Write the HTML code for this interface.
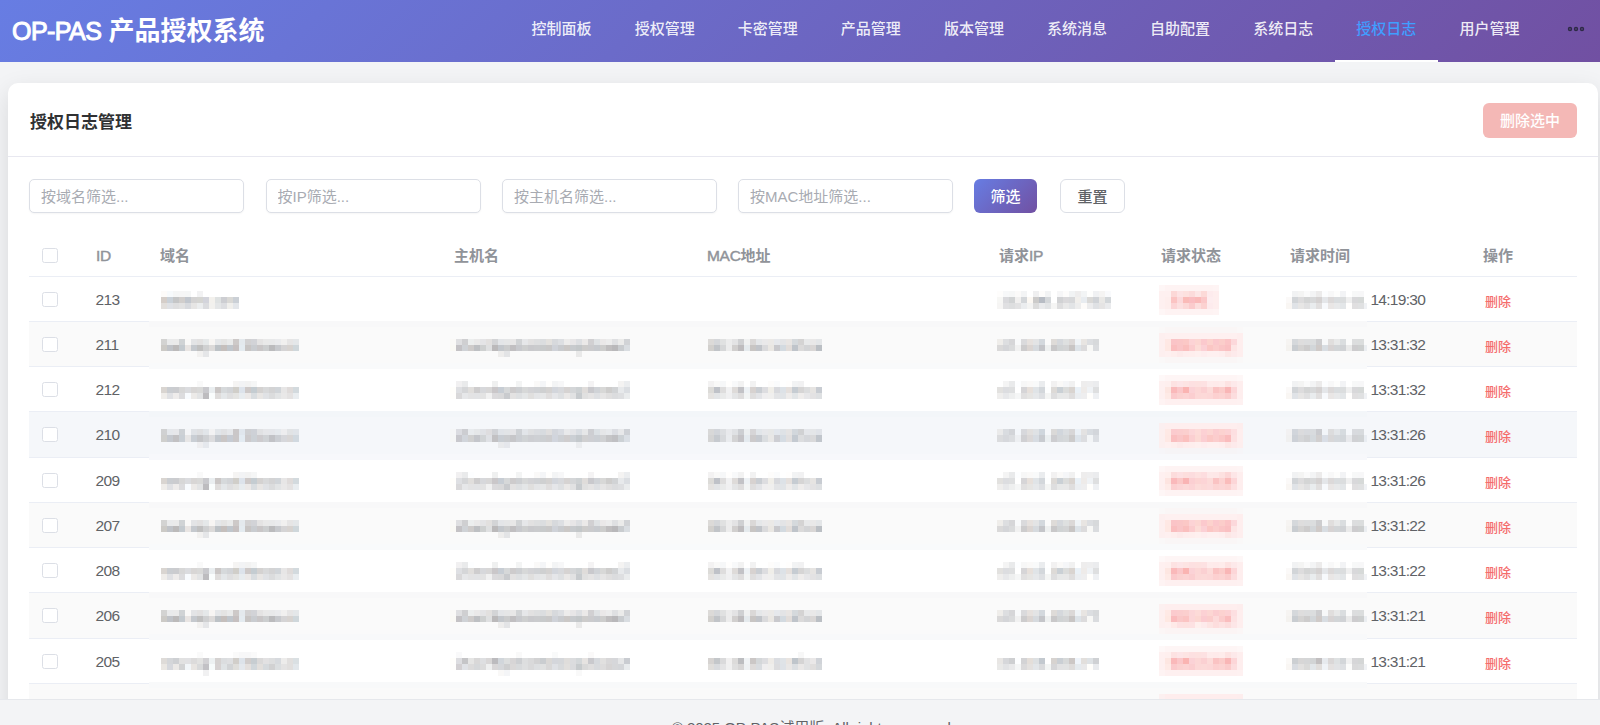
<!DOCTYPE html>
<html lang="zh-CN">
<head>
<meta charset="utf-8">
<title>OP-PAS 产品授权系统</title>
<style>
*{box-sizing:border-box;margin:0;padding:0}
button,input{font-family:inherit;border:0;outline:0;display:block}
html,body{width:1600px;height:725px;overflow:hidden}
body{background:#f3f4f6;font-family:"Liberation Sans","Noto Sans CJK SC",sans-serif;color:#606266;position:relative}
.hdr{position:absolute;left:0;top:0;width:1600px;height:62px;background:linear-gradient(135deg,#677de3 0%,#7150a2 100%)}
.logo{position:absolute;left:12px;top:1px;height:61px;line-height:61px;font-size:26px;font-weight:700;color:#fff;white-space:nowrap}
.lat{font-size:25px;letter-spacing:-.55px;font-weight:400;-webkit-text-stroke:1px #fff}
.nav{position:absolute;left:510px;top:0;height:62px;display:flex}
.nav a{display:block;width:103.1px;height:62px;line-height:58px;text-align:center;font-size:15px;color:rgba(255,255,255,.9);font-weight:500;text-decoration:none;white-space:nowrap}
.nav a.on{color:#409eff;border-bottom:2px solid #fff}
.more{position:absolute;left:1567px;top:25px;width:18px;height:8px}
.card{position:absolute;left:8px;top:83px;width:1590px;height:700px;background:#fff;border-radius:10px;box-shadow:0 8px 24px rgba(0,0,0,.115)}
.ctitle{position:absolute;left:22px;top:25.5px;font-size:17px;font-weight:700;color:#303133;line-height:28px;white-space:nowrap}
.bdel{position:absolute;left:1475px;top:20px;width:94px;height:34.5px;border-radius:6px;background:#f4b8b6;color:#fff;font-size:15px;line-height:36px;font-weight:500;text-align:center}
.hr{position:absolute;left:0;top:73px;width:1590px;height:1px;background:#e8e8f0}
.inp{position:absolute;top:96px;width:215px;height:34px;border:1px solid #dcdfe6;border-radius:5px;padding-left:11px;line-height:32px;font-size:15px;color:#a8abb2;white-space:nowrap;box-shadow:0 1px 2px rgba(0,0,0,.04)}
.inp::placeholder{color:#a8abb2;opacity:1}
.btn{position:absolute;top:96px;height:34px;border-radius:6px;font-size:15px;line-height:33.4px;text-align:center}
.b1{left:966px;width:63px;background:linear-gradient(135deg,#677de3,#7150a2);color:#fff;line-height:35.4px;font-weight:500}
.b2{left:1052.3px;width:64.6px;border:1px solid #dcdfe6;color:#606266;background:#fff;font-weight:500}
.tbl{position:absolute;left:21px;top:149px;width:1548px}
.th{position:absolute;top:2px;height:44px;line-height:44px;font-size:15px;font-weight:700;color:#909399;white-space:nowrap}
.th i{font-style:normal;font-weight:400;font-size:15.5px;letter-spacing:-.3px;-webkit-text-stroke:.45px #909399}
.row{position:absolute;left:0;width:1548px;height:45.25px;border-bottom:1px solid #ebeef5}
.row.s{background:#fafafa}
.row.h{background:#f5f7fa}
.cb{position:absolute;left:13.4px;width:15.3px;height:15px;border:1px solid #dcdfe6;border-radius:2.5px;background:#fff}
.id{position:absolute;left:66.6px;font-size:15.5px;letter-spacing:-.65px;color:#606266;line-height:45px;top:0}
.tm{position:absolute;left:1341.4px;font-size:15.5px;letter-spacing:-.7px;color:#606266;line-height:45px;top:0}
.del{position:absolute;left:1456px;font-size:13px;font-weight:500;color:#f56c6c;line-height:45px;top:2px}
.mos{position:absolute;left:149px;top:279px}
.ftr{position:absolute;left:0;top:699px;width:1600px;height:26px;background:#f3f4f6;border-top:1px solid #e6e8ec;overflow:hidden}
.ftr span{position:absolute;left:672px;top:17.7px;font-size:15px;color:#606266;line-height:20px;white-space:nowrap;letter-spacing:-.08px}
</style>
</head>
<body>
<div class="hdr">
  <div class="logo"><span class="lat">OP-PAS</span> 产品授权系统</div>
  <div class="nav">
    <a>控制面板</a><a>授权管理</a><a>卡密管理</a><a>产品管理</a><a>版本管理</a><a>系统消息</a><a>自助配置</a><a>系统日志</a><a class="on">授权日志</a><a>用户管理</a>
  </div>
  <svg class="more" viewBox="0 0 18 8"><circle cx="3" cy="4" r="1.45" fill="none" stroke="#2d2a45" stroke-width="1.5"/><circle cx="9" cy="4" r="1.45" fill="none" stroke="#2d2a45" stroke-width="1.5"/><circle cx="15" cy="4" r="1.45" fill="none" stroke="#2d2a45" stroke-width="1.5"/></svg>
</div>
<div class="card">
  <div class="ctitle">授权日志管理</div>
  <button class="bdel" disabled>删除选中</button>
  <div class="hr"></div>
  <input class="inp" style="left:21px" placeholder="按域名筛选...">
  <input class="inp" style="left:257.5px" placeholder="按IP筛选...">
  <input class="inp" style="left:494px" placeholder="按主机名筛选...">
  <input class="inp" style="left:730px" placeholder="按MAC地址筛选...">
  <button class="btn b1">筛选</button>
  <button class="btn b2">重置</button>
  <div class="tbl">
    <div class="cb" style="top:16px"></div>
    <div class="th" style="left:67px"><i>ID</i></div>
    <div class="th" style="left:131px">域名</div>
    <div class="th" style="left:425px">主机名</div>
    <div class="th" style="left:678px"><i>MAC</i>地址</div>
    <div class="th" style="left:970px">请求<i>IP</i></div>
    <div class="th" style="left:1132px">请求状态</div>
    <div class="th" style="left:1261px">请求时间</div>
    <div class="th" style="left:1454px">操作</div>
    <div class="row" style="top:43.5px;height:1px;border-bottom:1px solid #ebeef5"></div>
    <div class="row " style="top:44.5px"><div class="cb" style="top:15px"></div><div class="id">213</div><div class="tm">14:19:30</div><div class="del">删除</div></div>
<div class="row s" style="top:89.75px"><div class="cb" style="top:15px"></div><div class="id">211</div><div class="tm">13:31:32</div><div class="del">删除</div></div>
<div class="row " style="top:135.0px"><div class="cb" style="top:15px"></div><div class="id">212</div><div class="tm">13:31:32</div><div class="del">删除</div></div>
<div class="row h" style="top:180.25px"><div class="cb" style="top:15px"></div><div class="id">210</div><div class="tm">13:31:26</div><div class="del">删除</div></div>
<div class="row " style="top:225.5px"><div class="cb" style="top:15px"></div><div class="id">209</div><div class="tm">13:31:26</div><div class="del">删除</div></div>
<div class="row s" style="top:270.75px"><div class="cb" style="top:15px"></div><div class="id">207</div><div class="tm">13:31:22</div><div class="del">删除</div></div>
<div class="row " style="top:316.0px"><div class="cb" style="top:15px"></div><div class="id">208</div><div class="tm">13:31:22</div><div class="del">删除</div></div>
<div class="row s" style="top:361.25px"><div class="cb" style="top:15px"></div><div class="id">206</div><div class="tm">13:31:21</div><div class="del">删除</div></div>
<div class="row " style="top:406.5px"><div class="cb" style="top:15px"></div><div class="id">205</div><div class="tm">13:31:21</div><div class="del">删除</div></div>
<div class="row s" style="top:451.75px"><div class="cb" style="top:15px"></div><div class="id">204</div><div class="tm">13:31:20</div><div class="del">删除</div></div>

  </div>
</div>
<svg class="mos" width="1218" height="420" viewBox="149 279 1218 420" shape-rendering="crispEdges"><g fill="#fef6f6"><rect x="1159" y="285" width="6" height="6"/><rect x="1159" y="309" width="6" height="6"/><rect x="1159" y="466" width="6" height="6"/><rect x="1159" y="490" width="6" height="6"/></g><g fill="#fef3f3"><rect x="1165" y="285" width="48" height="6"/><rect x="1165" y="309" width="48" height="6"/><rect x="1159" y="399" width="6" height="6"/><rect x="1165" y="466" width="72" height="6"/><rect x="1165" y="490" width="72" height="6"/><rect x="1159" y="580" width="6" height="6"/><rect x="1159" y="670" width="6" height="6"/></g><g fill="#fef4f4"><rect x="1213" y="285" width="6" height="6"/><rect x="1213" y="309" width="6" height="6"/><rect x="1237" y="466" width="6" height="6"/><rect x="1237" y="490" width="6" height="6"/></g><g fill="#fdfbf9"><rect x="161" y="291" width="6" height="6"/><rect x="1081" y="303" width="6" height="6"/></g><g fill="#f7fafc"><rect x="167" y="291" width="6" height="6"/></g><g fill="#f5f6f6"><rect x="173" y="291" width="6" height="6"/><rect x="185" y="291" width="6" height="6"/><rect x="251" y="381" width="6" height="6"/><rect x="1015" y="393" width="6" height="6"/><rect x="450" y="435" width="6" height="7"/><rect x="251" y="472" width="6" height="6"/><rect x="1015" y="484" width="6" height="6"/><rect x="251" y="562" width="6" height="6"/><rect x="1015" y="574" width="6" height="6"/><rect x="1015" y="664" width="6" height="6"/></g><g fill="#f6f6f6"><rect x="179" y="291" width="6" height="6"/></g><g fill="#f2f2f3"><rect x="197" y="291" width="6" height="6"/><rect x="209" y="429" width="6" height="6"/></g><g fill="#fefdfc"><rect x="997" y="291" width="6" height="6"/></g><g fill="#f7f8f9"><rect x="1003" y="291" width="6" height="6"/><rect x="1322" y="339" width="6" height="6"/><rect x="1322" y="520" width="6" height="6"/><rect x="1322" y="610" width="6" height="6"/></g><g fill="#f6f7f7"><rect x="1009" y="291" width="6" height="6"/></g><g fill="#fbfaf9"><rect x="1015" y="291" width="6" height="6"/></g><g fill="#f3f4f5"><rect x="1021" y="291" width="6" height="6"/><rect x="1310" y="291" width="6" height="6"/><rect x="552" y="381" width="6" height="6"/><rect x="1310" y="381" width="6" height="6"/><rect x="552" y="472" width="6" height="6"/><rect x="1310" y="472" width="6" height="6"/><rect x="552" y="562" width="6" height="6"/><rect x="1310" y="562" width="6" height="6"/></g><g fill="#efeff0"><rect x="1033" y="291" width="6" height="6"/></g><g fill="#fdfcfb"><rect x="1039" y="291" width="6" height="6"/><rect x="1063" y="291" width="6" height="6"/><rect x="768" y="381" width="6" height="6"/><rect x="768" y="472" width="6" height="6"/><rect x="768" y="562" width="6" height="6"/></g><g fill="#f2f3f4"><rect x="1045" y="291" width="6" height="6"/><rect x="792" y="381" width="6" height="6"/><rect x="792" y="472" width="6" height="6"/><rect x="792" y="562" width="6" height="6"/></g><g fill="#f6f6f7"><rect x="1057" y="291" width="6" height="6"/></g><g fill="#f1f3f4"><rect x="1069" y="291" width="6" height="6"/></g><g fill="#eeeded"><rect x="1075" y="291" width="6" height="6"/><rect x="1081" y="381" width="6" height="6"/><rect x="1081" y="472" width="6" height="6"/><rect x="1081" y="562" width="6" height="6"/></g><g fill="#f2f4f5"><rect x="1081" y="291" width="6" height="6"/></g><g fill="#fefefd"><rect x="1087" y="291" width="6" height="6"/></g><g fill="#f0f1f3"><rect x="1093" y="291" width="6" height="6"/></g><g fill="#f5f4f3"><rect x="1099" y="291" width="6" height="6"/><rect x="233" y="381" width="6" height="6"/><rect x="233" y="472" width="6" height="6"/><rect x="233" y="562" width="6" height="6"/></g><g fill="#f9fafc"><rect x="1105" y="291" width="6" height="6"/></g><g fill="#fef0f0"><rect x="1159" y="291" width="12" height="6"/><rect x="1159" y="297" width="6" height="6"/><rect x="1159" y="303" width="6" height="6"/><rect x="1165" y="333" width="72" height="6"/><rect x="1165" y="351" width="6" height="6"/><rect x="1207" y="351" width="12" height="6"/><rect x="1159" y="381" width="6" height="6"/><rect x="1159" y="387" width="6" height="6"/><rect x="1159" y="393" width="6" height="6"/><rect x="1165" y="399" width="72" height="6"/><rect x="1165" y="442" width="6" height="6"/><rect x="1207" y="442" width="12" height="6"/><rect x="1159" y="472" width="6" height="6"/><rect x="1159" y="478" width="6" height="6"/><rect x="1159" y="484" width="6" height="6"/><rect x="1165" y="514" width="72" height="6"/><rect x="1165" y="532" width="6" height="6"/><rect x="1207" y="532" width="12" height="6"/><rect x="1159" y="562" width="6" height="6"/><rect x="1159" y="568" width="6" height="6"/><rect x="1159" y="574" width="6" height="6"/><rect x="1165" y="580" width="72" height="6"/><rect x="1165" y="622" width="6" height="6"/><rect x="1159" y="652" width="6" height="6"/><rect x="1159" y="658" width="6" height="6"/><rect x="1159" y="664" width="6" height="6"/><rect x="1165" y="670" width="72" height="6"/></g><g fill="#fcd8d7"><rect x="1171" y="291" width="6" height="6"/><rect x="1183" y="303" width="6" height="6"/><rect x="1195" y="393" width="6" height="6"/><rect x="1195" y="574" width="6" height="6"/><rect x="1195" y="664" width="6" height="6"/></g><g fill="#fde3e4"><rect x="1177" y="291" width="6" height="6"/></g><g fill="#fde1df"><rect x="1183" y="291" width="6" height="6"/></g><g fill="#fcdbdb"><rect x="1189" y="291" width="6" height="6"/></g><g fill="#fde6e6"><rect x="1195" y="291" width="6" height="6"/></g><g fill="#fcdad8"><rect x="1201" y="291" width="6" height="6"/></g><g fill="#fdebed"><rect x="1207" y="291" width="6" height="6"/><rect x="1207" y="303" width="6" height="6"/></g><g fill="#feeeee"><rect x="1213" y="291" width="6" height="6"/><rect x="1213" y="297" width="6" height="6"/><rect x="1213" y="303" width="6" height="6"/><rect x="1237" y="333" width="6" height="6"/><rect x="1237" y="339" width="6" height="6"/><rect x="1237" y="345" width="6" height="6"/><rect x="1219" y="351" width="6" height="6"/><rect x="1237" y="351" width="6" height="6"/><rect x="1237" y="381" width="6" height="6"/><rect x="1237" y="387" width="6" height="6"/><rect x="1237" y="393" width="6" height="6"/><rect x="1165" y="423" width="72" height="6"/><rect x="1237" y="429" width="6" height="6"/><rect x="1237" y="435" width="6" height="7"/><rect x="1219" y="442" width="6" height="6"/><rect x="1237" y="472" width="6" height="6"/><rect x="1237" y="478" width="6" height="6"/><rect x="1237" y="484" width="6" height="6"/><rect x="1237" y="514" width="6" height="6"/><rect x="1237" y="520" width="6" height="6"/><rect x="1237" y="526" width="6" height="6"/><rect x="1219" y="532" width="6" height="6"/><rect x="1237" y="532" width="6" height="6"/><rect x="1237" y="562" width="6" height="6"/><rect x="1237" y="568" width="6" height="6"/><rect x="1237" y="574" width="6" height="6"/><rect x="1165" y="604" width="72" height="6"/><rect x="1237" y="610" width="6" height="6"/><rect x="1237" y="616" width="6" height="6"/><rect x="1237" y="622" width="6" height="6"/><rect x="1237" y="652" width="6" height="6"/><rect x="1237" y="658" width="6" height="6"/><rect x="1237" y="664" width="6" height="6"/></g><g fill="#f1f2f3"><rect x="1292" y="291" width="6" height="6"/><rect x="1292" y="381" width="6" height="6"/><rect x="1292" y="472" width="6" height="6"/><rect x="1292" y="562" width="6" height="6"/></g><g fill="#f4f4f3"><rect x="1298" y="291" width="6" height="6"/><rect x="1027" y="303" width="6" height="6"/><rect x="1298" y="381" width="6" height="6"/><rect x="1298" y="472" width="6" height="6"/><rect x="1298" y="562" width="6" height="6"/></g><g fill="#fafafa"><rect x="1304" y="291" width="6" height="6"/><rect x="1304" y="381" width="6" height="6"/><rect x="1304" y="472" width="6" height="6"/><rect x="1304" y="562" width="6" height="6"/><rect x="197" y="652" width="6" height="6"/><rect x="233" y="652" width="6" height="6"/><rect x="251" y="652" width="6" height="6"/></g><g fill="#ecebeb"><rect x="1316" y="291" width="6" height="6"/><rect x="1316" y="381" width="6" height="6"/><rect x="1316" y="472" width="6" height="6"/><rect x="1316" y="562" width="6" height="6"/></g><g fill="#fcfdfe"><rect x="1322" y="291" width="6" height="6"/><rect x="1322" y="381" width="6" height="6"/><rect x="1322" y="472" width="6" height="6"/><rect x="1322" y="562" width="6" height="6"/></g><g fill="#f8f8f8"><rect x="1328" y="291" width="6" height="6"/><rect x="1328" y="381" width="6" height="6"/><rect x="1328" y="472" width="6" height="6"/><rect x="1328" y="562" width="6" height="6"/></g><g fill="#fdfdfc"><rect x="1334" y="291" width="6" height="6"/><rect x="1334" y="381" width="6" height="6"/><rect x="1334" y="472" width="6" height="6"/><rect x="1334" y="562" width="6" height="6"/></g><g fill="#f2f3f5"><rect x="1340" y="291" width="6" height="6"/><rect x="239" y="381" width="6" height="6"/><rect x="1340" y="381" width="6" height="6"/><rect x="239" y="472" width="6" height="6"/><rect x="1340" y="472" width="6" height="6"/><rect x="239" y="562" width="6" height="6"/><rect x="1340" y="562" width="6" height="6"/></g><g fill="#f7f8f8"><rect x="1352" y="291" width="6" height="6"/><rect x="1352" y="381" width="6" height="6"/><rect x="1352" y="472" width="6" height="6"/><rect x="1352" y="562" width="6" height="6"/></g><g fill="#f7f7f8"><rect x="1358" y="291" width="6" height="6"/><rect x="558" y="381" width="6" height="6"/><rect x="1358" y="381" width="6" height="6"/><rect x="558" y="472" width="6" height="6"/><rect x="1358" y="472" width="6" height="6"/><rect x="558" y="562" width="6" height="6"/><rect x="1358" y="562" width="6" height="6"/><rect x="239" y="652" width="12" height="6"/></g><g fill="#d5cec9"><rect x="161" y="297" width="6" height="6"/></g><g fill="#cad1d8"><rect x="167" y="297" width="6" height="6"/></g><g fill="#c5c6c7"><rect x="173" y="297" width="6" height="6"/></g><g fill="#d1cecc"><rect x="179" y="297" width="6" height="6"/></g><g fill="#c2c7ce"><rect x="185" y="297" width="6" height="6"/></g><g fill="#d4d3d3"><rect x="191" y="297" width="6" height="6"/><rect x="798" y="339" width="6" height="6"/><rect x="798" y="520" width="6" height="6"/><rect x="798" y="610" width="6" height="6"/></g><g fill="#d5d5d2"><rect x="197" y="297" width="6" height="6"/></g><g fill="#d3d4db"><rect x="203" y="297" width="6" height="6"/></g><g fill="#f3f1ed"><rect x="209" y="297" width="6" height="6"/></g><g fill="#dfe2e2"><rect x="215" y="297" width="6" height="6"/></g><g fill="#cdced2"><rect x="221" y="297" width="6" height="6"/><rect x="588" y="429" width="6" height="6"/><rect x="528" y="435" width="6" height="7"/></g><g fill="#dad9d6"><rect x="227" y="297" width="6" height="6"/></g><g fill="#cbd0d6"><rect x="233" y="297" width="6" height="6"/></g><g fill="#f7f7f5"><rect x="997" y="297" width="6" height="6"/></g><g fill="#dadadd"><rect x="1003" y="297" width="6" height="6"/></g><g fill="#d1d3d4"><rect x="1009" y="297" width="6" height="6"/></g><g fill="#f1f0ef"><rect x="1015" y="297" width="6" height="6"/><rect x="281" y="339" width="6" height="6"/><rect x="281" y="520" width="6" height="6"/><rect x="281" y="610" width="6" height="6"/></g><g fill="#d4d7da"><rect x="1021" y="297" width="6" height="6"/><rect x="1045" y="297" width="6" height="6"/></g><g fill="#fcf8f3"><rect x="1027" y="297" width="6" height="6"/></g><g fill="#cccbca"><rect x="1033" y="297" width="6" height="6"/></g><g fill="#b7bcc4"><rect x="1039" y="297" width="6" height="6"/></g><g fill="#d1d2d4"><rect x="1057" y="297" width="6" height="6"/></g><g fill="#dad9db"><rect x="1063" y="297" width="6" height="6"/></g><g fill="#d7d8da"><rect x="1069" y="297" width="6" height="6"/></g><g fill="#f1efec"><rect x="1075" y="297" width="6" height="6"/></g><g fill="#e8ecf0"><rect x="1081" y="297" width="6" height="6"/></g><g fill="#dad9d7"><rect x="1087" y="297" width="6" height="6"/></g><g fill="#d0d3d7"><rect x="1093" y="297" width="6" height="6"/><rect x="594" y="387" width="6" height="6"/><rect x="594" y="478" width="6" height="6"/><rect x="594" y="568" width="6" height="6"/></g><g fill="#e9e8e6"><rect x="1099" y="297" width="6" height="6"/></g><g fill="#d3d7da"><rect x="1105" y="297" width="6" height="6"/></g><g fill="#feeeed"><rect x="1165" y="297" width="6" height="6"/><rect x="1165" y="303" width="6" height="6"/><rect x="1171" y="351" width="6" height="6"/><rect x="1189" y="351" width="6" height="6"/><rect x="1171" y="442" width="6" height="6"/><rect x="1189" y="442" width="6" height="6"/><rect x="1171" y="532" width="6" height="6"/><rect x="1189" y="532" width="6" height="6"/></g><g fill="#fbc4c3"><rect x="1171" y="297" width="6" height="6"/><rect x="1183" y="616" width="6" height="6"/></g><g fill="#fcd9db"><rect x="1177" y="297" width="6" height="6"/></g><g fill="#fabbb8"><rect x="1183" y="297" width="6" height="6"/></g><g fill="#fabdc1"><rect x="1189" y="297" width="6" height="6"/></g><g fill="#fabab9"><rect x="1195" y="297" width="6" height="6"/></g><g fill="#fbc8c9"><rect x="1201" y="297" width="6" height="6"/></g><g fill="#fdedef"><rect x="1207" y="297" width="6" height="6"/></g><g fill="#fbf9f8"><rect x="1286" y="297" width="6" height="6"/><rect x="1286" y="387" width="6" height="6"/><rect x="1286" y="478" width="6" height="6"/><rect x="1286" y="568" width="6" height="6"/></g><g fill="#d2d5d8"><rect x="1292" y="297" width="6" height="6"/><rect x="1292" y="387" width="6" height="6"/><rect x="1292" y="478" width="6" height="6"/><rect x="1292" y="568" width="6" height="6"/></g><g fill="#dddcdd"><rect x="1298" y="297" width="6" height="6"/><rect x="1298" y="387" width="6" height="6"/><rect x="1298" y="478" width="6" height="6"/><rect x="1298" y="568" width="6" height="6"/></g><g fill="#d4d5d5"><rect x="1304" y="297" width="6" height="6"/><rect x="1304" y="387" width="6" height="6"/><rect x="1304" y="478" width="6" height="6"/><rect x="1304" y="568" width="6" height="6"/></g><g fill="#d8d9da"><rect x="1310" y="297" width="6" height="6"/><rect x="263" y="387" width="6" height="6"/><rect x="1310" y="387" width="6" height="6"/><rect x="263" y="478" width="6" height="6"/><rect x="1310" y="478" width="6" height="6"/><rect x="263" y="568" width="6" height="6"/><rect x="1310" y="568" width="6" height="6"/></g><g fill="#d5d2d2"><rect x="1316" y="297" width="6" height="6"/><rect x="1316" y="387" width="6" height="6"/><rect x="1316" y="478" width="6" height="6"/><rect x="1316" y="568" width="6" height="6"/></g><g fill="#e4e6e9"><rect x="1322" y="297" width="6" height="6"/><rect x="1322" y="387" width="6" height="6"/><rect x="1322" y="478" width="6" height="6"/><rect x="1322" y="568" width="6" height="6"/></g><g fill="#dcd9d9"><rect x="1328" y="297" width="6" height="6"/><rect x="1328" y="387" width="6" height="6"/><rect x="1328" y="478" width="6" height="6"/><rect x="1328" y="568" width="6" height="6"/></g><g fill="#dadddf"><rect x="1334" y="297" width="6" height="6"/><rect x="1340" y="339" width="6" height="6"/><rect x="1334" y="387" width="6" height="6"/><rect x="1334" y="478" width="6" height="6"/><rect x="1340" y="520" width="6" height="6"/><rect x="1334" y="568" width="6" height="6"/><rect x="1340" y="610" width="6" height="6"/></g><g fill="#dbddde"><rect x="1340" y="297" width="6" height="6"/><rect x="1310" y="339" width="6" height="6"/><rect x="1340" y="387" width="6" height="6"/><rect x="1340" y="478" width="6" height="6"/><rect x="1310" y="520" width="6" height="6"/><rect x="1340" y="568" width="6" height="6"/><rect x="1310" y="610" width="6" height="6"/></g><g fill="#efefef"><rect x="1346" y="297" width="6" height="6"/><rect x="1346" y="387" width="6" height="6"/><rect x="1346" y="478" width="6" height="6"/><rect x="1346" y="568" width="6" height="6"/></g><g fill="#d8d8da"><rect x="1352" y="297" width="6" height="6"/><rect x="1352" y="387" width="6" height="6"/><rect x="1352" y="478" width="6" height="6"/><rect x="1352" y="568" width="6" height="6"/></g><g fill="#d6d9d8"><rect x="1358" y="297" width="6" height="6"/><rect x="1358" y="387" width="6" height="6"/><rect x="1358" y="478" width="6" height="6"/><rect x="1358" y="568" width="6" height="6"/></g><g fill="#e2dfdc"><rect x="161" y="303" width="6" height="6"/><rect x="1081" y="658" width="6" height="6"/><rect x="257" y="664" width="6" height="6"/></g><g fill="#dfe1e5"><rect x="167" y="303" width="6" height="6"/><rect x="486" y="435" width="6" height="7"/><rect x="552" y="664" width="6" height="6"/></g><g fill="#dededf"><rect x="173" y="303" width="6" height="6"/><rect x="1057" y="303" width="6" height="6"/><rect x="1051" y="393" width="6" height="6"/><rect x="1051" y="484" width="6" height="6"/><rect x="1051" y="574" width="6" height="6"/></g><g fill="#e2e2e2"><rect x="179" y="303" width="6" height="6"/></g><g fill="#d8dade"><rect x="185" y="303" width="6" height="6"/><rect x="1304" y="429" width="6" height="6"/><rect x="1352" y="429" width="6" height="6"/></g><g fill="#e6e5e4"><rect x="191" y="303" width="6" height="6"/></g><g fill="#ebedee"><rect x="197" y="303" width="6" height="6"/></g><g fill="#dbdcdf"><rect x="203" y="303" width="6" height="6"/><rect x="185" y="387" width="6" height="6"/><rect x="185" y="478" width="6" height="6"/><rect x="185" y="568" width="6" height="6"/></g><g fill="#f2f1ee"><rect x="209" y="303" width="6" height="6"/></g><g fill="#e4e6e7"><rect x="215" y="303" width="6" height="6"/><rect x="522" y="393" width="6" height="6"/><rect x="522" y="484" width="6" height="6"/><rect x="522" y="574" width="6" height="6"/></g><g fill="#dddee1"><rect x="221" y="303" width="6" height="6"/></g><g fill="#f0efec"><rect x="227" y="303" width="6" height="6"/></g><g fill="#e3e6ea"><rect x="233" y="303" width="6" height="6"/></g><g fill="#f6f5f4"><rect x="997" y="303" width="6" height="6"/></g><g fill="#e0e0e2"><rect x="1003" y="303" width="6" height="6"/></g><g fill="#dddedf"><rect x="1009" y="303" width="6" height="6"/><rect x="269" y="658" width="6" height="6"/><rect x="522" y="658" width="6" height="6"/></g><g fill="#e2e2e3"><rect x="1015" y="303" width="6" height="6"/><rect x="804" y="658" width="6" height="6"/><rect x="1057" y="664" width="6" height="6"/></g><g fill="#ebedef"><rect x="1021" y="303" width="6" height="6"/><rect x="624" y="381" width="6" height="6"/><rect x="624" y="472" width="6" height="6"/><rect x="624" y="562" width="6" height="6"/></g><g fill="#dcdcdc"><rect x="1033" y="303" width="6" height="6"/><rect x="480" y="664" width="6" height="6"/></g><g fill="#e9eaec"><rect x="1039" y="303" width="6" height="6"/><rect x="498" y="442" width="6" height="6"/></g><g fill="#e2e4e6"><rect x="1045" y="303" width="6" height="6"/><rect x="1069" y="303" width="6" height="6"/></g><g fill="#f5f5f4"><rect x="1051" y="303" width="6" height="6"/></g><g fill="#e9e9e9"><rect x="1063" y="303" width="6" height="6"/><rect x="263" y="339" width="6" height="6"/><rect x="576" y="351" width="6" height="6"/><rect x="263" y="520" width="6" height="6"/><rect x="576" y="532" width="6" height="6"/><rect x="263" y="610" width="6" height="6"/><rect x="576" y="622" width="6" height="6"/></g><g fill="#ededed"><rect x="1075" y="303" width="6" height="6"/></g><g fill="#ececed"><rect x="1087" y="303" width="6" height="6"/></g><g fill="#dfe1e4"><rect x="1093" y="303" width="6" height="6"/><rect x="732" y="429" width="6" height="6"/></g><g fill="#e5e4e4"><rect x="1099" y="303" width="6" height="6"/><rect x="588" y="393" width="6" height="6"/><rect x="588" y="484" width="6" height="6"/><rect x="588" y="574" width="6" height="6"/></g><g fill="#eaebed"><rect x="1105" y="303" width="6" height="6"/><rect x="275" y="339" width="6" height="6"/><rect x="275" y="520" width="6" height="6"/><rect x="275" y="610" width="6" height="6"/></g><g fill="#fcd5d6"><rect x="1171" y="303" width="6" height="6"/><rect x="1177" y="484" width="6" height="6"/></g><g fill="#fce0e0"><rect x="1177" y="303" width="6" height="6"/></g><g fill="#fbcbcc"><rect x="1189" y="303" width="6" height="6"/></g><g fill="#fcdedd"><rect x="1195" y="303" width="6" height="6"/></g><g fill="#fcd2d1"><rect x="1201" y="303" width="6" height="6"/></g><g fill="#f9f6f3"><rect x="1286" y="303" width="6" height="6"/><rect x="1286" y="393" width="6" height="6"/><rect x="1286" y="484" width="6" height="6"/><rect x="1286" y="574" width="6" height="6"/><rect x="1286" y="664" width="6" height="6"/></g><g fill="#e0e3e7"><rect x="1292" y="303" width="6" height="6"/><rect x="1292" y="393" width="6" height="6"/><rect x="1292" y="484" width="6" height="6"/><rect x="1292" y="574" width="6" height="6"/></g><g fill="#e7e6e5"><rect x="1298" y="303" width="6" height="6"/><rect x="1298" y="393" width="6" height="6"/><rect x="1298" y="484" width="6" height="6"/><rect x="1298" y="574" width="6" height="6"/></g><g fill="#e0e0e1"><rect x="1304" y="303" width="6" height="6"/><rect x="1304" y="393" width="6" height="6"/><rect x="1304" y="484" width="6" height="6"/><rect x="1304" y="574" width="6" height="6"/></g><g fill="#e9ecee"><rect x="1310" y="303" width="6" height="6"/><rect x="1310" y="393" width="6" height="6"/><rect x="1310" y="484" width="6" height="6"/><rect x="1310" y="574" width="6" height="6"/></g><g fill="#e1dfdf"><rect x="1316" y="303" width="6" height="6"/><rect x="1316" y="393" width="6" height="6"/><rect x="786" y="435" width="6" height="7"/><rect x="1316" y="484" width="6" height="6"/><rect x="1316" y="574" width="6" height="6"/></g><g fill="#f7f9fc"><rect x="1322" y="303" width="6" height="6"/><rect x="1322" y="393" width="6" height="6"/><rect x="1322" y="484" width="6" height="6"/><rect x="1322" y="574" width="6" height="6"/></g><g fill="#e9e6e5"><rect x="1328" y="303" width="6" height="6"/><rect x="1328" y="393" width="6" height="6"/><rect x="1328" y="484" width="6" height="6"/><rect x="1328" y="574" width="6" height="6"/></g><g fill="#e8e9ea"><rect x="1334" y="303" width="6" height="6"/><rect x="269" y="339" width="6" height="6"/><rect x="804" y="339" width="6" height="6"/><rect x="1334" y="393" width="6" height="6"/><rect x="1334" y="484" width="6" height="6"/><rect x="269" y="520" width="6" height="6"/><rect x="804" y="520" width="6" height="6"/><rect x="1334" y="574" width="6" height="6"/><rect x="269" y="610" width="6" height="6"/><rect x="804" y="610" width="6" height="6"/></g><g fill="#e3e6e8"><rect x="1340" y="303" width="6" height="6"/><rect x="1340" y="393" width="6" height="6"/><rect x="1340" y="484" width="6" height="6"/><rect x="1340" y="574" width="6" height="6"/></g><g fill="#fffefd"><rect x="1346" y="303" width="6" height="6"/><rect x="546" y="381" width="6" height="6"/><rect x="726" y="381" width="6" height="6"/><rect x="786" y="381" width="6" height="6"/><rect x="1346" y="393" width="6" height="6"/><rect x="546" y="472" width="6" height="6"/><rect x="726" y="472" width="6" height="6"/><rect x="786" y="472" width="6" height="6"/><rect x="1346" y="484" width="6" height="6"/><rect x="546" y="562" width="6" height="6"/><rect x="726" y="562" width="6" height="6"/><rect x="786" y="562" width="6" height="6"/><rect x="1346" y="574" width="6" height="6"/></g><g fill="#e0dfe0"><rect x="1352" y="303" width="6" height="6"/><rect x="1352" y="393" width="6" height="6"/><rect x="1352" y="484" width="6" height="6"/><rect x="1352" y="574" width="6" height="6"/></g><g fill="#e0e1e2"><rect x="1358" y="303" width="6" height="6"/><rect x="1358" y="393" width="6" height="6"/><rect x="1358" y="484" width="6" height="6"/><rect x="1358" y="574" width="6" height="6"/></g><g fill="#f0f2f5"><rect x="1364" y="303" width="3" height="6"/><rect x="1364" y="393" width="3" height="6"/><rect x="1364" y="484" width="3" height="6"/><rect x="1364" y="574" width="3" height="6"/><rect x="1364" y="664" width="3" height="6"/></g><g fill="#f8f8f9"><rect x="149" y="321" width="1218" height="6"/><rect x="149" y="502" width="1218" height="6"/><rect x="149" y="592" width="1218" height="6"/></g><g fill="#faf8f8"><rect x="1159" y="327" width="6" height="6"/><rect x="1237" y="327" width="6" height="6"/><rect x="1159" y="357" width="6" height="6"/><rect x="1237" y="357" width="6" height="6"/><rect x="1159" y="508" width="6" height="6"/><rect x="1237" y="508" width="6" height="6"/><rect x="1159" y="538" width="6" height="6"/><rect x="1237" y="538" width="6" height="6"/></g><g fill="#faf6f6"><rect x="1165" y="327" width="72" height="6"/><rect x="1165" y="357" width="72" height="6"/><rect x="1165" y="508" width="72" height="6"/><rect x="1165" y="538" width="72" height="6"/></g><g fill="#fdefef"><rect x="1159" y="333" width="6" height="6"/><rect x="1159" y="339" width="6" height="6"/><rect x="1159" y="345" width="6" height="6"/><rect x="1159" y="351" width="6" height="6"/><rect x="1159" y="514" width="6" height="6"/><rect x="1159" y="520" width="6" height="6"/><rect x="1159" y="526" width="6" height="6"/><rect x="1159" y="532" width="6" height="6"/><rect x="1159" y="610" width="6" height="6"/><rect x="1159" y="616" width="6" height="6"/><rect x="1159" y="622" width="6" height="6"/></g><g fill="#d3d3d2"><rect x="161" y="339" width="6" height="6"/><rect x="161" y="520" width="6" height="6"/><rect x="161" y="610" width="6" height="6"/></g><g fill="#e9eaeb"><rect x="167" y="339" width="6" height="6"/><rect x="462" y="381" width="6" height="6"/><rect x="1009" y="381" width="6" height="6"/><rect x="462" y="472" width="6" height="6"/><rect x="1009" y="472" width="6" height="6"/><rect x="167" y="520" width="6" height="6"/><rect x="462" y="562" width="6" height="6"/><rect x="1009" y="562" width="6" height="6"/><rect x="167" y="610" width="6" height="6"/></g><g fill="#eaeaea"><rect x="173" y="339" width="6" height="6"/><rect x="1346" y="345" width="6" height="6"/><rect x="997" y="429" width="6" height="6"/><rect x="173" y="520" width="6" height="6"/><rect x="1346" y="526" width="6" height="6"/><rect x="173" y="610" width="6" height="6"/><rect x="1346" y="616" width="6" height="6"/></g><g fill="#d0d3d5"><rect x="179" y="339" width="6" height="6"/><rect x="522" y="435" width="6" height="7"/><rect x="1358" y="435" width="6" height="7"/><rect x="179" y="520" width="6" height="6"/><rect x="179" y="610" width="6" height="6"/></g><g fill="#f9f8f7"><rect x="185" y="339" width="6" height="6"/><rect x="185" y="520" width="6" height="6"/><rect x="185" y="610" width="6" height="6"/><rect x="498" y="670" width="6" height="6"/></g><g fill="#e3e4e6"><rect x="191" y="339" width="6" height="6"/><rect x="780" y="339" width="6" height="6"/><rect x="504" y="351" width="6" height="6"/><rect x="774" y="393" width="6" height="6"/><rect x="774" y="484" width="6" height="6"/><rect x="191" y="520" width="6" height="6"/><rect x="780" y="520" width="6" height="6"/><rect x="504" y="532" width="6" height="6"/><rect x="774" y="574" width="6" height="6"/><rect x="191" y="610" width="6" height="6"/><rect x="780" y="610" width="6" height="6"/><rect x="504" y="622" width="6" height="6"/></g><g fill="#e2e1e1"><rect x="197" y="339" width="6" height="6"/><rect x="528" y="339" width="6" height="6"/><rect x="197" y="520" width="6" height="6"/><rect x="528" y="520" width="6" height="6"/><rect x="197" y="610" width="6" height="6"/><rect x="528" y="610" width="6" height="6"/></g><g fill="#e5e8e9"><rect x="203" y="339" width="6" height="6"/><rect x="203" y="520" width="6" height="6"/><rect x="203" y="610" width="6" height="6"/></g><g fill="#f7f5f3"><rect x="209" y="339" width="6" height="6"/><rect x="209" y="520" width="6" height="6"/><rect x="209" y="610" width="6" height="6"/></g><g fill="#e5e7e9"><rect x="215" y="339" width="6" height="6"/><rect x="756" y="339" width="6" height="6"/><rect x="474" y="429" width="6" height="6"/><rect x="215" y="520" width="6" height="6"/><rect x="756" y="520" width="6" height="6"/><rect x="215" y="610" width="6" height="6"/><rect x="756" y="610" width="6" height="6"/></g><g fill="#e4e4e3"><rect x="221" y="339" width="6" height="6"/><rect x="221" y="520" width="6" height="6"/><rect x="221" y="610" width="6" height="6"/></g><g fill="#e9eaea"><rect x="227" y="339" width="6" height="6"/><rect x="720" y="393" width="6" height="6"/><rect x="720" y="484" width="6" height="6"/><rect x="227" y="520" width="6" height="6"/><rect x="720" y="574" width="6" height="6"/><rect x="227" y="610" width="6" height="6"/></g><g fill="#cdc9c8"><rect x="233" y="339" width="6" height="6"/><rect x="233" y="520" width="6" height="6"/><rect x="233" y="610" width="6" height="6"/></g><g fill="#e4e9ed"><rect x="239" y="339" width="6" height="6"/><rect x="239" y="520" width="6" height="6"/><rect x="239" y="610" width="6" height="6"/></g><g fill="#d2d1d2"><rect x="245" y="339" width="6" height="6"/><rect x="245" y="520" width="6" height="6"/><rect x="245" y="610" width="6" height="6"/></g><g fill="#d2d3d7"><rect x="251" y="339" width="6" height="6"/><rect x="251" y="520" width="6" height="6"/><rect x="251" y="610" width="6" height="6"/></g><g fill="#e4e3e3"><rect x="257" y="339" width="6" height="6"/><rect x="786" y="429" width="6" height="6"/><rect x="257" y="520" width="6" height="6"/><rect x="257" y="610" width="6" height="6"/><rect x="281" y="664" width="6" height="6"/></g><g fill="#e6e5e5"><rect x="287" y="339" width="6" height="6"/><rect x="600" y="393" width="6" height="6"/><rect x="600" y="484" width="6" height="6"/><rect x="287" y="520" width="6" height="6"/><rect x="600" y="574" width="6" height="6"/><rect x="287" y="610" width="6" height="6"/></g><g fill="#e4e7e9"><rect x="293" y="339" width="6" height="6"/><rect x="221" y="393" width="6" height="6"/><rect x="221" y="484" width="6" height="6"/><rect x="293" y="520" width="6" height="6"/><rect x="221" y="574" width="6" height="6"/><rect x="293" y="610" width="6" height="6"/></g><g fill="#faf9f7"><rect x="450" y="339" width="6" height="6"/><rect x="450" y="520" width="6" height="6"/><rect x="450" y="610" width="6" height="6"/></g><g fill="#dfdfe1"><rect x="456" y="339" width="6" height="6"/><rect x="456" y="520" width="6" height="6"/><rect x="456" y="610" width="6" height="6"/></g><g fill="#cfcfd1"><rect x="462" y="339" width="6" height="6"/><rect x="462" y="520" width="6" height="6"/><rect x="462" y="610" width="6" height="6"/></g><g fill="#eceeee"><rect x="468" y="339" width="6" height="6"/><rect x="468" y="520" width="6" height="6"/><rect x="468" y="610" width="6" height="6"/></g><g fill="#eae9e9"><rect x="474" y="339" width="6" height="6"/><rect x="474" y="520" width="6" height="6"/><rect x="474" y="610" width="6" height="6"/></g><g fill="#e4e4e6"><rect x="480" y="339" width="6" height="6"/><rect x="480" y="520" width="6" height="6"/><rect x="480" y="610" width="6" height="6"/></g><g fill="#e2e0df"><rect x="486" y="339" width="6" height="6"/><rect x="486" y="520" width="6" height="6"/><rect x="486" y="610" width="6" height="6"/></g><g fill="#d3d4d6"><rect x="492" y="339" width="6" height="6"/><rect x="804" y="345" width="6" height="6"/><rect x="492" y="520" width="6" height="6"/><rect x="804" y="526" width="6" height="6"/><rect x="492" y="610" width="6" height="6"/><rect x="804" y="616" width="6" height="6"/></g><g fill="#e3e5e8"><rect x="498" y="339" width="6" height="6"/><rect x="498" y="520" width="6" height="6"/><rect x="498" y="610" width="6" height="6"/></g><g fill="#e5e6e7"><rect x="504" y="339" width="6" height="6"/><rect x="504" y="520" width="6" height="6"/><rect x="504" y="610" width="6" height="6"/><rect x="618" y="658" width="6" height="6"/></g><g fill="#e8e7e7"><rect x="510" y="339" width="6" height="6"/><rect x="510" y="520" width="6" height="6"/><rect x="510" y="610" width="6" height="6"/></g><g fill="#d1d3d5"><rect x="516" y="339" width="6" height="6"/><rect x="612" y="387" width="6" height="6"/><rect x="612" y="478" width="6" height="6"/><rect x="516" y="520" width="6" height="6"/><rect x="612" y="568" width="6" height="6"/><rect x="516" y="610" width="6" height="6"/></g><g fill="#e6e7e9"><rect x="522" y="339" width="6" height="6"/><rect x="462" y="393" width="6" height="6"/><rect x="462" y="484" width="6" height="6"/><rect x="522" y="520" width="6" height="6"/><rect x="462" y="574" width="6" height="6"/><rect x="522" y="610" width="6" height="6"/></g><g fill="#dedfe0"><rect x="534" y="339" width="6" height="6"/><rect x="1009" y="387" width="6" height="6"/><rect x="1093" y="387" width="6" height="6"/><rect x="1009" y="478" width="6" height="6"/><rect x="1093" y="478" width="6" height="6"/><rect x="534" y="520" width="6" height="6"/><rect x="1009" y="568" width="6" height="6"/><rect x="1093" y="568" width="6" height="6"/><rect x="534" y="610" width="6" height="6"/><rect x="522" y="664" width="6" height="6"/></g><g fill="#dbdddf"><rect x="540" y="339" width="6" height="6"/><rect x="540" y="520" width="6" height="6"/><rect x="540" y="610" width="6" height="6"/><rect x="221" y="658" width="6" height="6"/></g><g fill="#e3e1de"><rect x="546" y="339" width="6" height="6"/><rect x="546" y="520" width="6" height="6"/><rect x="546" y="610" width="6" height="6"/></g><g fill="#d7d9dc"><rect x="552" y="339" width="6" height="6"/><rect x="720" y="435" width="6" height="7"/><rect x="552" y="520" width="6" height="6"/><rect x="552" y="610" width="6" height="6"/></g><g fill="#dddfe2"><rect x="558" y="339" width="6" height="6"/><rect x="576" y="339" width="6" height="6"/><rect x="558" y="520" width="6" height="6"/><rect x="576" y="520" width="6" height="6"/><rect x="558" y="610" width="6" height="6"/><rect x="576" y="610" width="6" height="6"/></g><g fill="#edeceb"><rect x="564" y="339" width="6" height="6"/><rect x="564" y="520" width="6" height="6"/><rect x="564" y="610" width="6" height="6"/><rect x="281" y="658" width="6" height="6"/></g><g fill="#e7e6e7"><rect x="570" y="339" width="6" height="6"/><rect x="570" y="520" width="6" height="6"/><rect x="570" y="610" width="6" height="6"/></g><g fill="#ebe9e8"><rect x="582" y="339" width="6" height="6"/><rect x="582" y="520" width="6" height="6"/><rect x="582" y="610" width="6" height="6"/></g><g fill="#d1d0d2"><rect x="588" y="339" width="6" height="6"/><rect x="588" y="520" width="6" height="6"/><rect x="588" y="610" width="6" height="6"/></g><g fill="#dfe2e4"><rect x="594" y="339" width="6" height="6"/><rect x="594" y="520" width="6" height="6"/><rect x="594" y="610" width="6" height="6"/></g><g fill="#eae8e8"><rect x="600" y="339" width="6" height="6"/><rect x="600" y="520" width="6" height="6"/><rect x="600" y="610" width="6" height="6"/><rect x="810" y="658" width="6" height="6"/></g><g fill="#ececec"><rect x="606" y="339" width="6" height="6"/><rect x="726" y="339" width="6" height="6"/><rect x="726" y="345" width="6" height="6"/><rect x="606" y="520" width="6" height="6"/><rect x="726" y="520" width="6" height="6"/><rect x="726" y="526" width="6" height="6"/><rect x="606" y="610" width="6" height="6"/><rect x="726" y="610" width="6" height="6"/><rect x="726" y="616" width="6" height="6"/></g><g fill="#dfe0e2"><rect x="612" y="339" width="6" height="6"/><rect x="612" y="520" width="6" height="6"/><rect x="612" y="610" width="6" height="6"/></g><g fill="#ebebea"><rect x="618" y="339" width="6" height="6"/><rect x="618" y="520" width="6" height="6"/><rect x="618" y="610" width="6" height="6"/></g><g fill="#d1d3d6"><rect x="624" y="339" width="6" height="6"/><rect x="624" y="520" width="6" height="6"/><rect x="624" y="610" width="6" height="6"/></g><g fill="#dcdad8"><rect x="708" y="339" width="6" height="6"/><rect x="708" y="520" width="6" height="6"/><rect x="708" y="610" width="6" height="6"/></g><g fill="#d5d7da"><rect x="714" y="339" width="6" height="6"/><rect x="714" y="520" width="6" height="6"/><rect x="714" y="610" width="6" height="6"/><rect x="558" y="658" width="6" height="6"/><rect x="498" y="664" width="6" height="6"/></g><g fill="#e0e1e1"><rect x="720" y="339" width="6" height="6"/><rect x="720" y="520" width="6" height="6"/><rect x="720" y="610" width="6" height="6"/><rect x="540" y="664" width="6" height="6"/></g><g fill="#e3e3e4"><rect x="732" y="339" width="6" height="6"/><rect x="468" y="393" width="6" height="6"/><rect x="468" y="484" width="6" height="6"/><rect x="732" y="520" width="6" height="6"/><rect x="468" y="574" width="6" height="6"/><rect x="732" y="610" width="6" height="6"/></g><g fill="#cfd0d2"><rect x="738" y="339" width="6" height="6"/><rect x="738" y="520" width="6" height="6"/><rect x="738" y="610" width="6" height="6"/></g><g fill="#f0f1f1"><rect x="744" y="339" width="6" height="6"/><rect x="744" y="520" width="6" height="6"/><rect x="744" y="610" width="6" height="6"/></g><g fill="#dad8d7"><rect x="750" y="339" width="6" height="6"/><rect x="750" y="520" width="6" height="6"/><rect x="750" y="610" width="6" height="6"/></g><g fill="#eae9ea"><rect x="762" y="339" width="6" height="6"/><rect x="762" y="520" width="6" height="6"/><rect x="762" y="610" width="6" height="6"/></g><g fill="#ebe9e7"><rect x="768" y="339" width="6" height="6"/><rect x="768" y="520" width="6" height="6"/><rect x="768" y="610" width="6" height="6"/><rect x="173" y="664" width="6" height="6"/></g><g fill="#e6e8ec"><rect x="774" y="339" width="6" height="6"/><rect x="774" y="520" width="6" height="6"/><rect x="774" y="610" width="6" height="6"/></g><g fill="#e8e5e3"><rect x="786" y="339" width="6" height="6"/><rect x="786" y="520" width="6" height="6"/><rect x="786" y="610" width="6" height="6"/></g><g fill="#d5d9dc"><rect x="792" y="339" width="6" height="6"/><rect x="792" y="520" width="6" height="6"/><rect x="792" y="610" width="6" height="6"/></g><g fill="#e9e8e8"><rect x="810" y="339" width="6" height="6"/><rect x="281" y="393" width="6" height="6"/><rect x="281" y="484" width="6" height="6"/><rect x="810" y="520" width="6" height="6"/><rect x="281" y="574" width="6" height="6"/><rect x="810" y="610" width="6" height="6"/></g><g fill="#e4e6e8"><rect x="816" y="339" width="6" height="6"/><rect x="810" y="429" width="6" height="6"/><rect x="816" y="520" width="6" height="6"/><rect x="816" y="610" width="6" height="6"/></g><g fill="#efedea"><rect x="997" y="339" width="6" height="6"/><rect x="161" y="393" width="6" height="6"/><rect x="161" y="484" width="6" height="6"/><rect x="997" y="520" width="6" height="6"/><rect x="161" y="574" width="6" height="6"/><rect x="997" y="610" width="6" height="6"/></g><g fill="#dddee0"><rect x="1003" y="339" width="6" height="6"/><rect x="1003" y="520" width="6" height="6"/><rect x="1003" y="610" width="6" height="6"/></g><g fill="#d6d6d8"><rect x="1009" y="339" width="6" height="6"/><rect x="1009" y="520" width="6" height="6"/><rect x="1009" y="610" width="6" height="6"/><rect x="1352" y="658" width="6" height="6"/><rect x="1051" y="664" width="6" height="6"/></g><g fill="#f8f9fa"><rect x="1015" y="339" width="6" height="6"/><rect x="732" y="381" width="6" height="6"/><rect x="732" y="472" width="6" height="6"/><rect x="1015" y="520" width="6" height="6"/><rect x="732" y="562" width="6" height="6"/><rect x="1015" y="610" width="6" height="6"/><rect x="149" y="634" width="1218" height="6"/><rect x="149" y="682" width="1218" height="6"/></g><g fill="#dadadc"><rect x="1021" y="339" width="6" height="6"/><rect x="762" y="345" width="6" height="6"/><rect x="1021" y="520" width="6" height="6"/><rect x="762" y="526" width="6" height="6"/><rect x="1021" y="610" width="6" height="6"/><rect x="762" y="616" width="6" height="6"/></g><g fill="#e6e1de"><rect x="1027" y="339" width="6" height="6"/><rect x="1027" y="520" width="6" height="6"/><rect x="1027" y="610" width="6" height="6"/></g><g fill="#e3e4e5"><rect x="1033" y="339" width="6" height="6"/><rect x="197" y="393" width="6" height="6"/><rect x="197" y="484" width="6" height="6"/><rect x="1033" y="520" width="6" height="6"/><rect x="197" y="574" width="6" height="6"/><rect x="1033" y="610" width="6" height="6"/></g><g fill="#d3d8dd"><rect x="1039" y="339" width="6" height="6"/><rect x="1039" y="520" width="6" height="6"/><rect x="1039" y="610" width="6" height="6"/></g><g fill="#dedbd8"><rect x="1051" y="339" width="6" height="6"/><rect x="1051" y="520" width="6" height="6"/><rect x="1051" y="610" width="6" height="6"/><rect x="161" y="658" width="6" height="6"/></g><g fill="#d5d8dc"><rect x="1057" y="339" width="6" height="6"/><rect x="1057" y="520" width="6" height="6"/><rect x="1057" y="610" width="6" height="6"/></g><g fill="#dee0e0"><rect x="1063" y="339" width="6" height="6"/><rect x="1063" y="520" width="6" height="6"/><rect x="1063" y="610" width="6" height="6"/></g><g fill="#dbd8d7"><rect x="1069" y="339" width="6" height="6"/><rect x="1069" y="520" width="6" height="6"/><rect x="1069" y="610" width="6" height="6"/></g><g fill="#eff3f6"><rect x="1075" y="339" width="6" height="6"/><rect x="1075" y="520" width="6" height="6"/><rect x="1075" y="610" width="6" height="6"/></g><g fill="#e8e5e2"><rect x="1081" y="339" width="6" height="6"/><rect x="1081" y="520" width="6" height="6"/><rect x="1081" y="610" width="6" height="6"/><rect x="191" y="664" width="6" height="6"/></g><g fill="#dcdee1"><rect x="1087" y="339" width="6" height="6"/><rect x="720" y="429" width="6" height="6"/><rect x="1087" y="520" width="6" height="6"/><rect x="1087" y="610" width="6" height="6"/></g><g fill="#d7d9db"><rect x="1093" y="339" width="6" height="6"/><rect x="1093" y="520" width="6" height="6"/><rect x="1093" y="610" width="6" height="6"/></g><g fill="#fee8e4"><rect x="1165" y="339" width="6" height="6"/><rect x="1165" y="435" width="6" height="7"/><rect x="1165" y="520" width="6" height="6"/></g><g fill="#fac4c7"><rect x="1171" y="339" width="6" height="6"/><rect x="1171" y="520" width="6" height="6"/></g><g fill="#fac6c7"><rect x="1177" y="339" width="6" height="6"/><rect x="1177" y="435" width="6" height="7"/><rect x="1177" y="520" width="6" height="6"/></g><g fill="#fbc8c6"><rect x="1183" y="339" width="6" height="6"/><rect x="1207" y="435" width="6" height="7"/><rect x="1183" y="520" width="6" height="6"/></g><g fill="#fcd3d5"><rect x="1189" y="339" width="6" height="6"/><rect x="1189" y="520" width="6" height="6"/></g><g fill="#fcd6d2"><rect x="1195" y="339" width="6" height="6"/><rect x="1195" y="520" width="6" height="6"/></g><g fill="#fbc9cd"><rect x="1201" y="339" width="6" height="6"/><rect x="1201" y="520" width="6" height="6"/></g><g fill="#fcd2cd"><rect x="1207" y="339" width="6" height="6"/><rect x="1207" y="520" width="6" height="6"/></g><g fill="#fbc8cc"><rect x="1213" y="339" width="6" height="6"/><rect x="1213" y="520" width="6" height="6"/></g><g fill="#fbcdca"><rect x="1219" y="339" width="6" height="6"/><rect x="1219" y="520" width="6" height="6"/></g><g fill="#fbc4c6"><rect x="1225" y="339" width="6" height="6"/><rect x="1225" y="520" width="6" height="6"/></g><g fill="#fcd8db"><rect x="1231" y="339" width="6" height="6"/><rect x="1231" y="520" width="6" height="6"/></g><g fill="#f6f4f2"><rect x="1286" y="339" width="6" height="6"/><rect x="1286" y="520" width="6" height="6"/><rect x="1286" y="610" width="6" height="6"/></g><g fill="#d5d8db"><rect x="1292" y="339" width="6" height="6"/><rect x="1292" y="520" width="6" height="6"/><rect x="1292" y="610" width="6" height="6"/><rect x="816" y="664" width="6" height="6"/></g><g fill="#dedddd"><rect x="1298" y="339" width="6" height="6"/><rect x="720" y="387" width="6" height="6"/><rect x="738" y="393" width="6" height="6"/><rect x="720" y="478" width="6" height="6"/><rect x="738" y="484" width="6" height="6"/><rect x="1298" y="520" width="6" height="6"/><rect x="720" y="568" width="6" height="6"/><rect x="738" y="574" width="6" height="6"/><rect x="1298" y="610" width="6" height="6"/></g><g fill="#dcddde"><rect x="1304" y="339" width="6" height="6"/><rect x="1352" y="339" width="6" height="6"/><rect x="804" y="387" width="6" height="6"/><rect x="804" y="478" width="6" height="6"/><rect x="1304" y="520" width="6" height="6"/><rect x="1352" y="520" width="6" height="6"/><rect x="804" y="568" width="6" height="6"/><rect x="1304" y="610" width="6" height="6"/><rect x="1352" y="610" width="6" height="6"/></g><g fill="#cdcdcf"><rect x="1316" y="339" width="6" height="6"/><rect x="546" y="435" width="6" height="7"/><rect x="1316" y="520" width="6" height="6"/><rect x="1316" y="610" width="6" height="6"/></g><g fill="#e0dedd"><rect x="1328" y="339" width="6" height="6"/><rect x="1328" y="520" width="6" height="6"/><rect x="1328" y="610" width="6" height="6"/><rect x="810" y="664" width="6" height="6"/></g><g fill="#e7e8e8"><rect x="1334" y="339" width="6" height="6"/><rect x="1057" y="393" width="6" height="6"/><rect x="1057" y="484" width="6" height="6"/><rect x="1334" y="520" width="6" height="6"/><rect x="1057" y="574" width="6" height="6"/><rect x="1334" y="610" width="6" height="6"/></g><g fill="#dbdddd"><rect x="1358" y="339" width="6" height="6"/><rect x="1358" y="520" width="6" height="6"/><rect x="1358" y="610" width="6" height="6"/></g><g fill="#cccac6"><rect x="161" y="345" width="6" height="6"/><rect x="161" y="526" width="6" height="6"/><rect x="161" y="616" width="6" height="6"/></g><g fill="#c0c3c8"><rect x="167" y="345" width="6" height="6"/><rect x="167" y="526" width="6" height="6"/><rect x="167" y="616" width="6" height="6"/></g><g fill="#bcbaba"><rect x="173" y="345" width="6" height="6"/><rect x="173" y="526" width="6" height="6"/><rect x="173" y="616" width="6" height="6"/></g><g fill="#c4cacf"><rect x="179" y="345" width="6" height="6"/><rect x="179" y="526" width="6" height="6"/><rect x="179" y="616" width="6" height="6"/></g><g fill="#e9e5e3"><rect x="185" y="345" width="6" height="6"/><rect x="185" y="526" width="6" height="6"/><rect x="185" y="616" width="6" height="6"/></g><g fill="#c5c9ce"><rect x="191" y="345" width="6" height="6"/><rect x="191" y="526" width="6" height="6"/><rect x="191" y="616" width="6" height="6"/></g><g fill="#c0c0c0"><rect x="197" y="345" width="6" height="6"/><rect x="197" y="526" width="6" height="6"/><rect x="197" y="616" width="6" height="6"/></g><g fill="#cfd0d1"><rect x="203" y="345" width="6" height="6"/><rect x="540" y="387" width="6" height="6"/><rect x="540" y="478" width="6" height="6"/><rect x="203" y="526" width="6" height="6"/><rect x="540" y="568" width="6" height="6"/><rect x="203" y="616" width="6" height="6"/></g><g fill="#dcdad9"><rect x="209" y="345" width="6" height="6"/><rect x="209" y="526" width="6" height="6"/><rect x="209" y="616" width="6" height="6"/></g><g fill="#bdc2c6"><rect x="215" y="345" width="6" height="6"/><rect x="215" y="526" width="6" height="6"/><rect x="215" y="616" width="6" height="6"/></g><g fill="#c5bfbc"><rect x="221" y="345" width="6" height="6"/><rect x="221" y="526" width="6" height="6"/><rect x="221" y="616" width="6" height="6"/></g><g fill="#c0c6cc"><rect x="227" y="345" width="6" height="6"/><rect x="227" y="526" width="6" height="6"/><rect x="227" y="616" width="6" height="6"/></g><g fill="#c6c0c0"><rect x="233" y="345" width="6" height="6"/><rect x="233" y="526" width="6" height="6"/><rect x="233" y="616" width="6" height="6"/></g><g fill="#e4ebf0"><rect x="239" y="345" width="6" height="6"/><rect x="239" y="526" width="6" height="6"/><rect x="239" y="616" width="6" height="6"/></g><g fill="#c8c5c4"><rect x="245" y="345" width="6" height="6"/><rect x="1069" y="345" width="6" height="6"/><rect x="245" y="526" width="6" height="6"/><rect x="1069" y="526" width="6" height="6"/><rect x="245" y="616" width="6" height="6"/><rect x="1069" y="616" width="6" height="6"/></g><g fill="#c9ccd0"><rect x="251" y="345" width="6" height="6"/><rect x="251" y="526" width="6" height="6"/><rect x="251" y="616" width="6" height="6"/></g><g fill="#c9c6c7"><rect x="257" y="345" width="6" height="6"/><rect x="257" y="526" width="6" height="6"/><rect x="257" y="616" width="6" height="6"/></g><g fill="#cccecf"><rect x="263" y="345" width="6" height="6"/><rect x="263" y="526" width="6" height="6"/><rect x="263" y="616" width="6" height="6"/></g><g fill="#bbbbbd"><rect x="269" y="345" width="6" height="6"/><rect x="269" y="526" width="6" height="6"/><rect x="269" y="616" width="6" height="6"/></g><g fill="#c7c9cd"><rect x="275" y="345" width="6" height="6"/><rect x="275" y="526" width="6" height="6"/><rect x="275" y="616" width="6" height="6"/></g><g fill="#d5d4d5"><rect x="281" y="345" width="6" height="6"/><rect x="281" y="526" width="6" height="6"/><rect x="281" y="616" width="6" height="6"/></g><g fill="#d7d3d0"><rect x="287" y="345" width="6" height="6"/><rect x="287" y="526" width="6" height="6"/><rect x="287" y="616" width="6" height="6"/><rect x="1051" y="658" width="6" height="6"/></g><g fill="#cfd7db"><rect x="293" y="345" width="6" height="6"/><rect x="293" y="526" width="6" height="6"/><rect x="293" y="616" width="6" height="6"/></g><g fill="#faf9f5"><rect x="450" y="345" width="6" height="6"/><rect x="450" y="526" width="6" height="6"/><rect x="450" y="616" width="6" height="6"/></g><g fill="#c4c2c5"><rect x="456" y="345" width="6" height="6"/><rect x="456" y="526" width="6" height="6"/><rect x="456" y="616" width="6" height="6"/></g><g fill="#cfd2d6"><rect x="462" y="345" width="6" height="6"/><rect x="462" y="526" width="6" height="6"/><rect x="462" y="616" width="6" height="6"/></g><g fill="#cecbca"><rect x="468" y="345" width="6" height="6"/><rect x="468" y="526" width="6" height="6"/><rect x="468" y="616" width="6" height="6"/></g><g fill="#bec0c3"><rect x="474" y="345" width="6" height="6"/><rect x="474" y="526" width="6" height="6"/><rect x="474" y="616" width="6" height="6"/></g><g fill="#ced0d0"><rect x="480" y="345" width="6" height="6"/><rect x="480" y="526" width="6" height="6"/><rect x="480" y="616" width="6" height="6"/></g><g fill="#dfe0e1"><rect x="486" y="345" width="6" height="6"/><rect x="486" y="526" width="6" height="6"/><rect x="486" y="616" width="6" height="6"/></g><g fill="#bbb9ba"><rect x="492" y="345" width="6" height="6"/><rect x="492" y="526" width="6" height="6"/><rect x="492" y="616" width="6" height="6"/></g><g fill="#c3c7cc"><rect x="498" y="345" width="6" height="6"/><rect x="498" y="526" width="6" height="6"/><rect x="498" y="616" width="6" height="6"/></g><g fill="#cbcccd"><rect x="504" y="345" width="6" height="6"/><rect x="504" y="526" width="6" height="6"/><rect x="504" y="616" width="6" height="6"/></g><g fill="#c1bfc1"><rect x="510" y="345" width="6" height="6"/><rect x="510" y="526" width="6" height="6"/><rect x="510" y="616" width="6" height="6"/></g><g fill="#c8c9cd"><rect x="516" y="345" width="6" height="6"/><rect x="516" y="526" width="6" height="6"/><rect x="516" y="616" width="6" height="6"/></g><g fill="#cecfcf"><rect x="522" y="345" width="6" height="6"/><rect x="522" y="526" width="6" height="6"/><rect x="522" y="616" width="6" height="6"/></g><g fill="#c9c9cc"><rect x="528" y="345" width="6" height="6"/><rect x="528" y="526" width="6" height="6"/><rect x="528" y="616" width="6" height="6"/></g><g fill="#cacbcd"><rect x="534" y="345" width="6" height="6"/><rect x="534" y="526" width="6" height="6"/><rect x="534" y="616" width="6" height="6"/></g><g fill="#c8cacb"><rect x="540" y="345" width="6" height="6"/><rect x="540" y="526" width="6" height="6"/><rect x="540" y="616" width="6" height="6"/></g><g fill="#c9c8c8"><rect x="546" y="345" width="6" height="6"/><rect x="546" y="526" width="6" height="6"/><rect x="546" y="616" width="6" height="6"/></g><g fill="#cfd2d8"><rect x="552" y="345" width="6" height="6"/><rect x="552" y="526" width="6" height="6"/><rect x="552" y="616" width="6" height="6"/></g><g fill="#c9cbce"><rect x="558" y="345" width="6" height="6"/><rect x="504" y="393" width="6" height="6"/><rect x="504" y="484" width="6" height="6"/><rect x="558" y="526" width="6" height="6"/><rect x="504" y="574" width="6" height="6"/><rect x="558" y="616" width="6" height="6"/></g><g fill="#cbc8c6"><rect x="564" y="345" width="6" height="6"/><rect x="564" y="526" width="6" height="6"/><rect x="564" y="616" width="6" height="6"/></g><g fill="#c7cacd"><rect x="570" y="345" width="6" height="6"/><rect x="570" y="526" width="6" height="6"/><rect x="570" y="616" width="6" height="6"/></g><g fill="#c3c7c9"><rect x="576" y="345" width="6" height="6"/><rect x="576" y="526" width="6" height="6"/><rect x="576" y="616" width="6" height="6"/></g><g fill="#cdcccb"><rect x="582" y="345" width="6" height="6"/><rect x="582" y="526" width="6" height="6"/><rect x="582" y="616" width="6" height="6"/></g><g fill="#cbcbcd"><rect x="588" y="345" width="6" height="6"/><rect x="588" y="526" width="6" height="6"/><rect x="588" y="616" width="6" height="6"/></g><g fill="#c7cace"><rect x="594" y="345" width="6" height="6"/><rect x="594" y="526" width="6" height="6"/><rect x="594" y="616" width="6" height="6"/></g><g fill="#cdcdcc"><rect x="600" y="345" width="6" height="6"/><rect x="600" y="526" width="6" height="6"/><rect x="600" y="616" width="6" height="6"/></g><g fill="#c0bebf"><rect x="606" y="345" width="6" height="6"/><rect x="606" y="526" width="6" height="6"/><rect x="606" y="616" width="6" height="6"/></g><g fill="#b9b8ba"><rect x="612" y="345" width="6" height="6"/><rect x="612" y="526" width="6" height="6"/><rect x="612" y="616" width="6" height="6"/></g><g fill="#c9cccf"><rect x="618" y="345" width="6" height="6"/><rect x="618" y="526" width="6" height="6"/><rect x="618" y="616" width="6" height="6"/></g><g fill="#d9dde1"><rect x="624" y="345" width="6" height="6"/><rect x="624" y="526" width="6" height="6"/><rect x="624" y="616" width="6" height="6"/></g><g fill="#d2d0cd"><rect x="708" y="345" width="6" height="6"/><rect x="708" y="526" width="6" height="6"/><rect x="708" y="616" width="6" height="6"/></g><g fill="#c1c4c8"><rect x="714" y="345" width="6" height="6"/><rect x="714" y="526" width="6" height="6"/><rect x="714" y="616" width="6" height="6"/></g><g fill="#d6d7d8"><rect x="720" y="345" width="6" height="6"/><rect x="720" y="526" width="6" height="6"/><rect x="720" y="616" width="6" height="6"/></g><g fill="#d1cfce"><rect x="732" y="345" width="6" height="6"/><rect x="732" y="526" width="6" height="6"/><rect x="732" y="616" width="6" height="6"/></g><g fill="#bebcbe"><rect x="738" y="345" width="6" height="6"/><rect x="738" y="526" width="6" height="6"/><rect x="738" y="616" width="6" height="6"/></g><g fill="#e5eaed"><rect x="744" y="345" width="6" height="6"/><rect x="744" y="526" width="6" height="6"/><rect x="744" y="616" width="6" height="6"/></g><g fill="#c8c5c3"><rect x="750" y="345" width="6" height="6"/><rect x="750" y="526" width="6" height="6"/><rect x="750" y="616" width="6" height="6"/></g><g fill="#c1c4c9"><rect x="756" y="345" width="6" height="6"/><rect x="756" y="526" width="6" height="6"/><rect x="756" y="616" width="6" height="6"/></g><g fill="#eae7e3"><rect x="768" y="345" width="6" height="6"/><rect x="768" y="526" width="6" height="6"/><rect x="768" y="616" width="6" height="6"/><rect x="161" y="664" width="6" height="6"/></g><g fill="#c9c9cd"><rect x="774" y="345" width="6" height="6"/><rect x="203" y="387" width="6" height="6"/><rect x="588" y="387" width="6" height="6"/><rect x="203" y="478" width="6" height="6"/><rect x="588" y="478" width="6" height="6"/><rect x="774" y="526" width="6" height="6"/><rect x="203" y="568" width="6" height="6"/><rect x="588" y="568" width="6" height="6"/><rect x="774" y="616" width="6" height="6"/><rect x="588" y="658" width="6" height="6"/></g><g fill="#d3dae0"><rect x="780" y="345" width="6" height="6"/><rect x="780" y="526" width="6" height="6"/><rect x="780" y="616" width="6" height="6"/></g><g fill="#e2ddda"><rect x="786" y="345" width="6" height="6"/><rect x="786" y="526" width="6" height="6"/><rect x="786" y="616" width="6" height="6"/></g><g fill="#bfc4ca"><rect x="792" y="345" width="6" height="6"/><rect x="792" y="526" width="6" height="6"/><rect x="792" y="616" width="6" height="6"/></g><g fill="#dbdada"><rect x="798" y="345" width="6" height="6"/><rect x="798" y="526" width="6" height="6"/><rect x="798" y="616" width="6" height="6"/></g><g fill="#d9d6d5"><rect x="810" y="345" width="6" height="6"/><rect x="810" y="526" width="6" height="6"/><rect x="810" y="616" width="6" height="6"/></g><g fill="#bbbfc4"><rect x="816" y="345" width="6" height="6"/><rect x="816" y="526" width="6" height="6"/><rect x="816" y="616" width="6" height="6"/></g><g fill="#dad9d9"><rect x="997" y="345" width="6" height="6"/><rect x="997" y="526" width="6" height="6"/><rect x="997" y="616" width="6" height="6"/><rect x="257" y="658" width="6" height="6"/></g><g fill="#d4d5d8"><rect x="1003" y="345" width="6" height="6"/><rect x="1003" y="526" width="6" height="6"/><rect x="1003" y="616" width="6" height="6"/></g><g fill="#dadbdc"><rect x="1009" y="345" width="6" height="6"/><rect x="1009" y="526" width="6" height="6"/><rect x="1009" y="616" width="6" height="6"/></g><g fill="#f1f1f1"><rect x="1015" y="345" width="6" height="6"/><rect x="1069" y="381" width="6" height="6"/><rect x="486" y="393" width="6" height="6"/><rect x="1069" y="472" width="6" height="6"/><rect x="486" y="484" width="6" height="6"/><rect x="1015" y="526" width="6" height="6"/><rect x="1069" y="562" width="6" height="6"/><rect x="486" y="574" width="6" height="6"/><rect x="1015" y="616" width="6" height="6"/><rect x="1346" y="658" width="6" height="6"/></g><g fill="#cdcccd"><rect x="1021" y="345" width="6" height="6"/><rect x="1021" y="526" width="6" height="6"/><rect x="1021" y="616" width="6" height="6"/></g><g fill="#dbd5d2"><rect x="1027" y="345" width="6" height="6"/><rect x="1027" y="526" width="6" height="6"/><rect x="1027" y="616" width="6" height="6"/></g><g fill="#d6dade"><rect x="1033" y="345" width="6" height="6"/><rect x="1033" y="526" width="6" height="6"/><rect x="1033" y="616" width="6" height="6"/></g><g fill="#c4c5c9"><rect x="1039" y="345" width="6" height="6"/><rect x="1039" y="526" width="6" height="6"/><rect x="1039" y="616" width="6" height="6"/></g><g fill="#eef0f0"><rect x="1045" y="345" width="6" height="6"/><rect x="1045" y="526" width="6" height="6"/><rect x="1045" y="616" width="6" height="6"/></g><g fill="#c9c8c9"><rect x="1051" y="345" width="6" height="6"/><rect x="1051" y="526" width="6" height="6"/><rect x="1051" y="616" width="6" height="6"/></g><g fill="#d0d3d4"><rect x="1057" y="345" width="6" height="6"/><rect x="1057" y="526" width="6" height="6"/><rect x="1057" y="616" width="6" height="6"/></g><g fill="#d3d4d5"><rect x="1063" y="345" width="6" height="6"/><rect x="1063" y="526" width="6" height="6"/><rect x="1063" y="616" width="6" height="6"/></g><g fill="#dde3e8"><rect x="1075" y="345" width="6" height="6"/><rect x="1075" y="526" width="6" height="6"/><rect x="1075" y="616" width="6" height="6"/></g><g fill="#dcdbdc"><rect x="1081" y="345" width="6" height="6"/><rect x="1081" y="526" width="6" height="6"/><rect x="1081" y="616" width="6" height="6"/></g><g fill="#f8f8f6"><rect x="1087" y="345" width="6" height="6"/><rect x="1087" y="526" width="6" height="6"/><rect x="1087" y="616" width="6" height="6"/></g><g fill="#dadcdf"><rect x="1093" y="345" width="6" height="6"/><rect x="1093" y="526" width="6" height="6"/><rect x="1093" y="616" width="6" height="6"/></g><g fill="#fee8e3"><rect x="1165" y="345" width="6" height="6"/><rect x="1165" y="526" width="6" height="6"/></g><g fill="#fabebf"><rect x="1171" y="345" width="6" height="6"/><rect x="1171" y="526" width="6" height="6"/></g><g fill="#fac5c7"><rect x="1177" y="345" width="6" height="6"/><rect x="1177" y="526" width="6" height="6"/></g><g fill="#fabfbe"><rect x="1183" y="345" width="6" height="6"/><rect x="1183" y="526" width="6" height="6"/></g><g fill="#fbccce"><rect x="1189" y="345" width="6" height="6"/><rect x="1189" y="526" width="6" height="6"/></g><g fill="#fcdcd7"><rect x="1195" y="345" width="6" height="6"/><rect x="1195" y="526" width="6" height="6"/></g><g fill="#fbd0d5"><rect x="1201" y="345" width="6" height="6"/><rect x="1201" y="526" width="6" height="6"/></g><g fill="#fbc6c4"><rect x="1207" y="345" width="6" height="6"/><rect x="1207" y="526" width="6" height="6"/></g><g fill="#fbcccb"><rect x="1213" y="345" width="6" height="6"/><rect x="1213" y="526" width="6" height="6"/></g><g fill="#fac5c6"><rect x="1219" y="345" width="6" height="6"/><rect x="1219" y="526" width="6" height="6"/></g><g fill="#fac0c2"><rect x="1225" y="345" width="6" height="6"/><rect x="1225" y="526" width="6" height="6"/></g><g fill="#fde5e5"><rect x="1231" y="345" width="6" height="6"/><rect x="1231" y="526" width="6" height="6"/></g><g fill="#f4f2ef"><rect x="1286" y="345" width="6" height="6"/><rect x="1286" y="526" width="6" height="6"/><rect x="1286" y="616" width="6" height="6"/></g><g fill="#c9cdd1"><rect x="1292" y="345" width="6" height="6"/><rect x="1292" y="526" width="6" height="6"/><rect x="1292" y="616" width="6" height="6"/></g><g fill="#d4d3d2"><rect x="1298" y="345" width="6" height="6"/><rect x="1298" y="526" width="6" height="6"/><rect x="1298" y="616" width="6" height="6"/></g><g fill="#cdcccc"><rect x="1304" y="345" width="6" height="6"/><rect x="1304" y="526" width="6" height="6"/><rect x="1304" y="616" width="6" height="6"/></g><g fill="#d2d6d9"><rect x="1310" y="345" width="6" height="6"/><rect x="1310" y="526" width="6" height="6"/><rect x="1310" y="616" width="6" height="6"/></g><g fill="#cfcac8"><rect x="1316" y="345" width="6" height="6"/><rect x="1316" y="526" width="6" height="6"/><rect x="1316" y="616" width="6" height="6"/></g><g fill="#d8dde2"><rect x="1322" y="345" width="6" height="6"/><rect x="1322" y="526" width="6" height="6"/><rect x="1322" y="616" width="6" height="6"/></g><g fill="#d7d3d3"><rect x="1328" y="345" width="6" height="6"/><rect x="1328" y="526" width="6" height="6"/><rect x="1328" y="616" width="6" height="6"/></g><g fill="#d2d5d7"><rect x="1334" y="345" width="6" height="6"/><rect x="1334" y="526" width="6" height="6"/><rect x="1334" y="616" width="6" height="6"/></g><g fill="#d0d2d5"><rect x="1340" y="345" width="6" height="6"/><rect x="534" y="387" width="6" height="6"/><rect x="534" y="478" width="6" height="6"/><rect x="1340" y="526" width="6" height="6"/><rect x="534" y="568" width="6" height="6"/><rect x="1340" y="616" width="6" height="6"/></g><g fill="#cdccce"><rect x="1352" y="345" width="6" height="6"/><rect x="1352" y="526" width="6" height="6"/><rect x="1352" y="616" width="6" height="6"/></g><g fill="#cdcfcf"><rect x="1358" y="345" width="6" height="6"/><rect x="1358" y="526" width="6" height="6"/><rect x="1358" y="616" width="6" height="6"/></g><g fill="#ebeef1"><rect x="1364" y="345" width="3" height="6"/><rect x="1075" y="393" width="6" height="6"/><rect x="1075" y="484" width="6" height="6"/><rect x="1364" y="526" width="3" height="6"/><rect x="1075" y="574" width="6" height="6"/><rect x="1364" y="616" width="3" height="6"/></g><g fill="#f2f1f0"><rect x="197" y="351" width="6" height="6"/><rect x="197" y="532" width="6" height="6"/><rect x="197" y="622" width="6" height="6"/></g><g fill="#e5e6e8"><rect x="203" y="351" width="6" height="6"/><rect x="600" y="429" width="6" height="6"/><rect x="203" y="532" width="6" height="6"/><rect x="203" y="622" width="6" height="6"/></g><g fill="#eeedec"><rect x="498" y="351" width="6" height="6"/><rect x="498" y="532" width="6" height="6"/><rect x="498" y="622" width="6" height="6"/></g><g fill="#fdeaea"><rect x="1177" y="351" width="6" height="6"/><rect x="1177" y="442" width="6" height="6"/><rect x="1177" y="532" width="6" height="6"/></g><g fill="#feeded"><rect x="1183" y="351" width="6" height="6"/><rect x="1183" y="442" width="6" height="6"/><rect x="1183" y="532" width="6" height="6"/><rect x="1165" y="694" width="72" height="5"/></g><g fill="#fef0ef"><rect x="1195" y="351" width="6" height="6"/><rect x="1195" y="442" width="6" height="6"/><rect x="1195" y="532" width="6" height="6"/></g><g fill="#feedee"><rect x="1201" y="351" width="6" height="6"/><rect x="1201" y="442" width="6" height="6"/><rect x="1201" y="532" width="6" height="6"/></g><g fill="#fde7e6"><rect x="1225" y="351" width="6" height="6"/><rect x="1225" y="442" width="6" height="6"/><rect x="1225" y="532" width="6" height="6"/></g><g fill="#fdeaeb"><rect x="1231" y="351" width="6" height="6"/><rect x="1231" y="442" width="6" height="6"/><rect x="1231" y="532" width="6" height="6"/><rect x="1201" y="622" width="6" height="6"/></g><g fill="#f9fafb"><rect x="149" y="363" width="1218" height="6"/><rect x="149" y="544" width="1218" height="6"/></g><g fill="#fef8f8"><rect x="1159" y="375" width="6" height="6"/><rect x="1159" y="556" width="6" height="6"/><rect x="1159" y="646" width="6" height="6"/></g><g fill="#fef5f5"><rect x="1165" y="375" width="72" height="6"/><rect x="1165" y="556" width="72" height="6"/><rect x="1165" y="646" width="72" height="6"/></g><g fill="#fef7f7"><rect x="1237" y="375" width="6" height="6"/><rect x="1237" y="556" width="6" height="6"/><rect x="1237" y="646" width="6" height="6"/></g><g fill="#f9f9f9"><rect x="197" y="381" width="6" height="6"/><rect x="197" y="472" width="6" height="6"/><rect x="197" y="562" width="6" height="6"/><rect x="516" y="652" width="6" height="6"/><rect x="576" y="670" width="6" height="6"/></g><g fill="#f2f2f2"><rect x="245" y="381" width="6" height="6"/><rect x="738" y="381" width="6" height="6"/><rect x="750" y="381" width="6" height="6"/><rect x="245" y="472" width="6" height="6"/><rect x="738" y="472" width="6" height="6"/><rect x="750" y="472" width="6" height="6"/><rect x="245" y="562" width="6" height="6"/><rect x="738" y="562" width="6" height="6"/><rect x="750" y="562" width="6" height="6"/></g><g fill="#f1f0f1"><rect x="456" y="381" width="6" height="6"/><rect x="456" y="472" width="6" height="6"/><rect x="456" y="562" width="6" height="6"/></g><g fill="#fdfeff"><rect x="468" y="381" width="6" height="6"/><rect x="1015" y="381" width="6" height="6"/><rect x="468" y="472" width="6" height="6"/><rect x="1015" y="472" width="6" height="6"/><rect x="468" y="562" width="6" height="6"/><rect x="1015" y="562" width="6" height="6"/><rect x="1015" y="658" width="6" height="6"/></g><g fill="#eff0f0"><rect x="492" y="381" width="6" height="6"/><rect x="492" y="472" width="6" height="6"/><rect x="492" y="562" width="6" height="6"/><rect x="486" y="664" width="6" height="6"/></g><g fill="#f3f4f4"><rect x="516" y="381" width="6" height="6"/><rect x="516" y="472" width="6" height="6"/><rect x="516" y="562" width="6" height="6"/></g><g fill="#faf9f8"><rect x="534" y="381" width="6" height="6"/><rect x="1027" y="381" width="6" height="6"/><rect x="1057" y="381" width="6" height="6"/><rect x="534" y="472" width="6" height="6"/><rect x="1027" y="472" width="6" height="6"/><rect x="1057" y="472" width="6" height="6"/><rect x="534" y="562" width="6" height="6"/><rect x="1027" y="562" width="6" height="6"/><rect x="1057" y="562" width="6" height="6"/></g><g fill="#f4f5f7"><rect x="540" y="381" width="6" height="6"/><rect x="185" y="429" width="6" height="6"/><rect x="540" y="472" width="6" height="6"/><rect x="540" y="562" width="6" height="6"/><rect x="504" y="670" width="6" height="6"/></g><g fill="#f4f3f4"><rect x="588" y="381" width="6" height="6"/><rect x="588" y="472" width="6" height="6"/><rect x="588" y="562" width="6" height="6"/></g><g fill="#f4f3f2"><rect x="618" y="381" width="6" height="6"/><rect x="618" y="472" width="6" height="6"/><rect x="618" y="562" width="6" height="6"/></g><g fill="#f3f2f2"><rect x="708" y="381" width="6" height="6"/><rect x="708" y="472" width="6" height="6"/><rect x="708" y="562" width="6" height="6"/></g><g fill="#f9f9f8"><rect x="714" y="381" width="6" height="6"/><rect x="714" y="472" width="6" height="6"/><rect x="714" y="562" width="6" height="6"/></g><g fill="#f6f7f8"><rect x="720" y="381" width="6" height="6"/><rect x="720" y="472" width="6" height="6"/><rect x="720" y="562" width="6" height="6"/></g><g fill="#fafbfc"><rect x="774" y="381" width="6" height="6"/><rect x="774" y="472" width="6" height="6"/><rect x="774" y="562" width="6" height="6"/></g><g fill="#f1f1f2"><rect x="798" y="381" width="6" height="6"/><rect x="726" y="387" width="6" height="6"/><rect x="798" y="472" width="6" height="6"/><rect x="726" y="478" width="6" height="6"/><rect x="798" y="562" width="6" height="6"/><rect x="726" y="568" width="6" height="6"/><rect x="203" y="670" width="6" height="6"/></g><g fill="#f4f4f4"><rect x="1003" y="381" width="6" height="6"/><rect x="1003" y="472" width="6" height="6"/><rect x="1003" y="562" width="6" height="6"/></g><g fill="#f7f7f7"><rect x="1021" y="381" width="6" height="6"/><rect x="1021" y="472" width="6" height="6"/><rect x="1021" y="562" width="6" height="6"/><rect x="798" y="652" width="6" height="6"/></g><g fill="#f9fafa"><rect x="1033" y="381" width="6" height="6"/><rect x="1033" y="472" width="6" height="6"/><rect x="1033" y="562" width="6" height="6"/><rect x="552" y="652" width="6" height="6"/></g><g fill="#eaecee"><rect x="1039" y="381" width="6" height="6"/><rect x="1039" y="472" width="6" height="6"/><rect x="1039" y="562" width="6" height="6"/></g><g fill="#f2f1f1"><rect x="1051" y="381" width="6" height="6"/><rect x="1051" y="472" width="6" height="6"/><rect x="1051" y="562" width="6" height="6"/></g><g fill="#f5f6f8"><rect x="1063" y="381" width="6" height="6"/><rect x="1063" y="472" width="6" height="6"/><rect x="1063" y="562" width="6" height="6"/></g><g fill="#eeeeef"><rect x="1087" y="381" width="6" height="6"/><rect x="1081" y="393" width="6" height="6"/><rect x="1087" y="472" width="6" height="6"/><rect x="1081" y="484" width="6" height="6"/><rect x="1087" y="562" width="6" height="6"/><rect x="1081" y="574" width="6" height="6"/></g><g fill="#ebecee"><rect x="1093" y="381" width="6" height="6"/><rect x="1093" y="472" width="6" height="6"/><rect x="1093" y="562" width="6" height="6"/></g><g fill="#feefee"><rect x="1165" y="381" width="6" height="6"/><rect x="1165" y="562" width="6" height="6"/><rect x="1165" y="652" width="6" height="6"/></g><g fill="#fde2e2"><rect x="1171" y="381" width="6" height="6"/><rect x="1171" y="562" width="6" height="6"/><rect x="1219" y="622" width="6" height="6"/><rect x="1171" y="652" width="6" height="6"/></g><g fill="#fde5e7"><rect x="1177" y="381" width="6" height="6"/><rect x="1177" y="562" width="6" height="6"/><rect x="1177" y="652" width="6" height="6"/></g><g fill="#fde4e3"><rect x="1183" y="381" width="6" height="6"/><rect x="1183" y="562" width="6" height="6"/><rect x="1207" y="622" width="6" height="6"/><rect x="1183" y="652" width="6" height="6"/></g><g fill="#fde0e1"><rect x="1189" y="381" width="6" height="6"/><rect x="1231" y="484" width="6" height="6"/><rect x="1189" y="562" width="6" height="6"/><rect x="1189" y="652" width="6" height="6"/></g><g fill="#fde1e0"><rect x="1195" y="381" width="6" height="6"/><rect x="1195" y="472" width="6" height="6"/><rect x="1219" y="472" width="6" height="6"/><rect x="1195" y="562" width="6" height="6"/><rect x="1183" y="622" width="6" height="6"/><rect x="1195" y="652" width="6" height="6"/></g><g fill="#fde1e2"><rect x="1201" y="381" width="6" height="6"/><rect x="1231" y="435" width="6" height="7"/><rect x="1201" y="562" width="6" height="6"/><rect x="1177" y="622" width="6" height="6"/><rect x="1189" y="622" width="6" height="6"/><rect x="1201" y="652" width="6" height="6"/></g><g fill="#feebeb"><rect x="1207" y="381" width="6" height="6"/><rect x="1207" y="562" width="6" height="6"/><rect x="1207" y="652" width="6" height="6"/></g><g fill="#feeaea"><rect x="1213" y="381" width="6" height="6"/><rect x="1213" y="562" width="6" height="6"/><rect x="1213" y="652" width="6" height="6"/></g><g fill="#feeceb"><rect x="1219" y="381" width="6" height="6"/><rect x="1219" y="562" width="6" height="6"/><rect x="1219" y="652" width="6" height="6"/></g><g fill="#fde3e2"><rect x="1225" y="381" width="6" height="6"/><rect x="1225" y="562" width="6" height="6"/><rect x="1225" y="652" width="6" height="6"/></g><g fill="#fde9ea"><rect x="1231" y="381" width="6" height="6"/><rect x="1231" y="562" width="6" height="6"/><rect x="1231" y="652" width="6" height="6"/></g><g fill="#d9d5d1"><rect x="161" y="387" width="6" height="6"/><rect x="161" y="478" width="6" height="6"/><rect x="161" y="568" width="6" height="6"/></g><g fill="#cacdd1"><rect x="167" y="387" width="6" height="6"/><rect x="167" y="478" width="6" height="6"/><rect x="167" y="568" width="6" height="6"/></g><g fill="#cbcccf"><rect x="173" y="387" width="6" height="6"/><rect x="173" y="478" width="6" height="6"/><rect x="173" y="568" width="6" height="6"/></g><g fill="#d7d7d7"><rect x="179" y="387" width="6" height="6"/><rect x="179" y="478" width="6" height="6"/><rect x="179" y="568" width="6" height="6"/></g><g fill="#d8d6d5"><rect x="191" y="387" width="6" height="6"/><rect x="191" y="478" width="6" height="6"/><rect x="191" y="568" width="6" height="6"/></g><g fill="#d9d9d8"><rect x="197" y="387" width="6" height="6"/><rect x="197" y="478" width="6" height="6"/><rect x="197" y="568" width="6" height="6"/></g><g fill="#eaeef0"><rect x="209" y="387" width="6" height="6"/><rect x="209" y="478" width="6" height="6"/><rect x="209" y="568" width="6" height="6"/></g><g fill="#cbc7c6"><rect x="215" y="387" width="6" height="6"/><rect x="215" y="478" width="6" height="6"/><rect x="215" y="568" width="6" height="6"/><rect x="750" y="658" width="6" height="6"/></g><g fill="#d6d9db"><rect x="221" y="387" width="6" height="6"/><rect x="221" y="478" width="6" height="6"/><rect x="221" y="568" width="6" height="6"/></g><g fill="#d2d4d7"><rect x="227" y="387" width="6" height="6"/><rect x="227" y="478" width="6" height="6"/><rect x="227" y="568" width="6" height="6"/></g><g fill="#d0cec9"><rect x="233" y="387" width="6" height="6"/><rect x="233" y="478" width="6" height="6"/><rect x="233" y="568" width="6" height="6"/></g><g fill="#dde3eb"><rect x="239" y="387" width="6" height="6"/><rect x="239" y="478" width="6" height="6"/><rect x="239" y="568" width="6" height="6"/></g><g fill="#cec9c8"><rect x="245" y="387" width="6" height="6"/><rect x="245" y="478" width="6" height="6"/><rect x="245" y="568" width="6" height="6"/></g><g fill="#c4ccd1"><rect x="251" y="387" width="6" height="6"/><rect x="251" y="478" width="6" height="6"/><rect x="251" y="568" width="6" height="6"/></g><g fill="#d4d2d1"><rect x="257" y="387" width="6" height="6"/><rect x="546" y="387" width="6" height="6"/><rect x="257" y="478" width="6" height="6"/><rect x="546" y="478" width="6" height="6"/><rect x="257" y="568" width="6" height="6"/><rect x="546" y="568" width="6" height="6"/></g><g fill="#d3d3d4"><rect x="269" y="387" width="6" height="6"/><rect x="732" y="435" width="6" height="7"/><rect x="269" y="478" width="6" height="6"/><rect x="269" y="568" width="6" height="6"/></g><g fill="#d1d5d9"><rect x="275" y="387" width="6" height="6"/><rect x="275" y="478" width="6" height="6"/><rect x="275" y="568" width="6" height="6"/></g><g fill="#e7e6e6"><rect x="281" y="387" width="6" height="6"/><rect x="185" y="435" width="6" height="7"/><rect x="281" y="478" width="6" height="6"/><rect x="281" y="568" width="6" height="6"/></g><g fill="#dfdbda"><rect x="287" y="387" width="6" height="6"/><rect x="287" y="478" width="6" height="6"/><rect x="287" y="568" width="6" height="6"/></g><g fill="#d3dade"><rect x="293" y="387" width="6" height="6"/><rect x="293" y="478" width="6" height="6"/><rect x="293" y="568" width="6" height="6"/></g><g fill="#fffefb"><rect x="450" y="387" width="6" height="6"/><rect x="450" y="478" width="6" height="6"/><rect x="450" y="568" width="6" height="6"/><rect x="450" y="658" width="6" height="6"/><rect x="1087" y="664" width="6" height="6"/></g><g fill="#dedfe2"><rect x="456" y="387" width="6" height="6"/><rect x="456" y="478" width="6" height="6"/><rect x="456" y="568" width="6" height="6"/></g><g fill="#d5d6d8"><rect x="462" y="387" width="6" height="6"/><rect x="1298" y="435" width="6" height="7"/><rect x="462" y="478" width="6" height="6"/><rect x="462" y="568" width="6" height="6"/></g><g fill="#e0dedc"><rect x="468" y="387" width="6" height="6"/><rect x="468" y="478" width="6" height="6"/><rect x="468" y="568" width="6" height="6"/></g><g fill="#cecdce"><rect x="474" y="387" width="6" height="6"/><rect x="474" y="478" width="6" height="6"/><rect x="474" y="568" width="6" height="6"/></g><g fill="#d7d8db"><rect x="480" y="387" width="6" height="6"/><rect x="480" y="478" width="6" height="6"/><rect x="480" y="568" width="6" height="6"/></g><g fill="#d8d7d7"><rect x="486" y="387" width="6" height="6"/><rect x="486" y="478" width="6" height="6"/><rect x="486" y="568" width="6" height="6"/></g><g fill="#cac7c9"><rect x="492" y="387" width="6" height="6"/><rect x="492" y="478" width="6" height="6"/><rect x="492" y="568" width="6" height="6"/></g><g fill="#c7cdd4"><rect x="498" y="387" width="6" height="6"/><rect x="498" y="478" width="6" height="6"/><rect x="498" y="568" width="6" height="6"/></g><g fill="#d6d8d9"><rect x="504" y="387" width="6" height="6"/><rect x="504" y="478" width="6" height="6"/><rect x="504" y="568" width="6" height="6"/></g><g fill="#cdcbcc"><rect x="510" y="387" width="6" height="6"/><rect x="510" y="478" width="6" height="6"/><rect x="510" y="568" width="6" height="6"/></g><g fill="#cdcfd2"><rect x="516" y="387" width="6" height="6"/><rect x="516" y="478" width="6" height="6"/><rect x="516" y="568" width="6" height="6"/><rect x="516" y="658" width="6" height="6"/></g><g fill="#d7d8d8"><rect x="522" y="387" width="6" height="6"/><rect x="522" y="478" width="6" height="6"/><rect x="522" y="568" width="6" height="6"/></g><g fill="#d3d3d6"><rect x="528" y="387" width="6" height="6"/><rect x="528" y="478" width="6" height="6"/><rect x="528" y="568" width="6" height="6"/></g><g fill="#d3d6dc"><rect x="552" y="387" width="6" height="6"/><rect x="552" y="429" width="6" height="6"/><rect x="552" y="478" width="6" height="6"/><rect x="552" y="568" width="6" height="6"/></g><g fill="#d8d9dc"><rect x="558" y="387" width="6" height="6"/><rect x="558" y="478" width="6" height="6"/><rect x="558" y="568" width="6" height="6"/></g><g fill="#d6d3d2"><rect x="564" y="387" width="6" height="6"/><rect x="564" y="478" width="6" height="6"/><rect x="564" y="568" width="6" height="6"/></g><g fill="#d4d6d8"><rect x="570" y="387" width="6" height="6"/><rect x="570" y="478" width="6" height="6"/><rect x="570" y="568" width="6" height="6"/></g><g fill="#cdd1d3"><rect x="576" y="387" width="6" height="6"/><rect x="576" y="478" width="6" height="6"/><rect x="576" y="568" width="6" height="6"/></g><g fill="#dfdcda"><rect x="582" y="387" width="6" height="6"/><rect x="582" y="478" width="6" height="6"/><rect x="582" y="568" width="6" height="6"/></g><g fill="#d8d8d7"><rect x="600" y="387" width="6" height="6"/><rect x="600" y="478" width="6" height="6"/><rect x="600" y="568" width="6" height="6"/></g><g fill="#cecdcc"><rect x="606" y="387" width="6" height="6"/><rect x="606" y="478" width="6" height="6"/><rect x="606" y="568" width="6" height="6"/></g><g fill="#e7e9eb"><rect x="618" y="387" width="6" height="6"/><rect x="618" y="478" width="6" height="6"/><rect x="618" y="568" width="6" height="6"/></g><g fill="#dbdee2"><rect x="624" y="387" width="6" height="6"/><rect x="624" y="478" width="6" height="6"/><rect x="624" y="568" width="6" height="6"/></g><g fill="#dcdbd8"><rect x="708" y="387" width="6" height="6"/><rect x="708" y="478" width="6" height="6"/><rect x="708" y="568" width="6" height="6"/></g><g fill="#bfc2c8"><rect x="714" y="387" width="6" height="6"/><rect x="714" y="478" width="6" height="6"/><rect x="714" y="568" width="6" height="6"/></g><g fill="#dedbd9"><rect x="732" y="387" width="6" height="6"/><rect x="732" y="478" width="6" height="6"/><rect x="732" y="568" width="6" height="6"/></g><g fill="#c2c2c6"><rect x="738" y="387" width="6" height="6"/><rect x="738" y="478" width="6" height="6"/><rect x="738" y="568" width="6" height="6"/></g><g fill="#edf1f4"><rect x="744" y="387" width="6" height="6"/><rect x="744" y="478" width="6" height="6"/><rect x="744" y="568" width="6" height="6"/></g><g fill="#d7d2d0"><rect x="750" y="387" width="6" height="6"/><rect x="750" y="478" width="6" height="6"/><rect x="750" y="568" width="6" height="6"/></g><g fill="#caced3"><rect x="756" y="387" width="6" height="6"/><rect x="756" y="478" width="6" height="6"/><rect x="756" y="568" width="6" height="6"/></g><g fill="#dddde0"><rect x="762" y="387" width="6" height="6"/><rect x="762" y="478" width="6" height="6"/><rect x="762" y="568" width="6" height="6"/><rect x="456" y="658" width="6" height="6"/><rect x="762" y="658" width="6" height="6"/></g><g fill="#f0eee9"><rect x="768" y="387" width="6" height="6"/><rect x="768" y="478" width="6" height="6"/><rect x="768" y="568" width="6" height="6"/></g><g fill="#d8d9dd"><rect x="774" y="387" width="6" height="6"/><rect x="774" y="478" width="6" height="6"/><rect x="774" y="568" width="6" height="6"/></g><g fill="#dde2e7"><rect x="780" y="387" width="6" height="6"/><rect x="780" y="478" width="6" height="6"/><rect x="780" y="568" width="6" height="6"/></g><g fill="#e5e0dd"><rect x="786" y="387" width="6" height="6"/><rect x="786" y="478" width="6" height="6"/><rect x="786" y="568" width="6" height="6"/></g><g fill="#c6ccd2"><rect x="792" y="387" width="6" height="6"/><rect x="792" y="478" width="6" height="6"/><rect x="792" y="568" width="6" height="6"/></g><g fill="#d6d5d5"><rect x="798" y="387" width="6" height="6"/><rect x="798" y="478" width="6" height="6"/><rect x="798" y="568" width="6" height="6"/></g><g fill="#e6e4e2"><rect x="810" y="387" width="6" height="6"/><rect x="810" y="478" width="6" height="6"/><rect x="810" y="568" width="6" height="6"/></g><g fill="#c8ccd2"><rect x="816" y="387" width="6" height="6"/><rect x="816" y="478" width="6" height="6"/><rect x="816" y="568" width="6" height="6"/></g><g fill="#e2e1df"><rect x="997" y="387" width="6" height="6"/><rect x="997" y="478" width="6" height="6"/><rect x="997" y="568" width="6" height="6"/></g><g fill="#dcdde0"><rect x="1003" y="387" width="6" height="6"/><rect x="1081" y="435" width="6" height="7"/><rect x="1003" y="478" width="6" height="6"/><rect x="1003" y="568" width="6" height="6"/></g><g fill="#d6d5d7"><rect x="1021" y="387" width="6" height="6"/><rect x="750" y="429" width="6" height="6"/><rect x="1021" y="478" width="6" height="6"/><rect x="1021" y="568" width="6" height="6"/></g><g fill="#e7e0db"><rect x="1027" y="387" width="6" height="6"/><rect x="1027" y="478" width="6" height="6"/><rect x="1027" y="568" width="6" height="6"/></g><g fill="#e0e4e7"><rect x="1033" y="387" width="6" height="6"/><rect x="1033" y="478" width="6" height="6"/><rect x="1033" y="568" width="6" height="6"/></g><g fill="#d3d7db"><rect x="1039" y="387" width="6" height="6"/><rect x="1039" y="478" width="6" height="6"/><rect x="1039" y="568" width="6" height="6"/></g><g fill="#fdfefe"><rect x="1045" y="387" width="6" height="6"/><rect x="1045" y="478" width="6" height="6"/><rect x="1045" y="568" width="6" height="6"/></g><g fill="#dddad7"><rect x="1051" y="387" width="6" height="6"/><rect x="1051" y="478" width="6" height="6"/><rect x="1051" y="568" width="6" height="6"/></g><g fill="#cad0d5"><rect x="1057" y="387" width="6" height="6"/><rect x="1057" y="478" width="6" height="6"/><rect x="1057" y="568" width="6" height="6"/></g><g fill="#dbdcdb"><rect x="1063" y="387" width="6" height="6"/><rect x="1063" y="478" width="6" height="6"/><rect x="1063" y="568" width="6" height="6"/></g><g fill="#d9d4d0"><rect x="1069" y="387" width="6" height="6"/><rect x="1069" y="478" width="6" height="6"/><rect x="1069" y="568" width="6" height="6"/></g><g fill="#eaf1f7"><rect x="1075" y="387" width="6" height="6"/><rect x="1075" y="478" width="6" height="6"/><rect x="1075" y="568" width="6" height="6"/></g><g fill="#eeebe9"><rect x="1081" y="387" width="6" height="6"/><rect x="1081" y="478" width="6" height="6"/><rect x="1081" y="568" width="6" height="6"/></g><g fill="#eff2f5"><rect x="1087" y="387" width="6" height="6"/><rect x="1087" y="478" width="6" height="6"/><rect x="1087" y="568" width="6" height="6"/></g><g fill="#fde6e1"><rect x="1165" y="387" width="6" height="6"/><rect x="1165" y="568" width="6" height="6"/><rect x="1165" y="658" width="6" height="6"/></g><g fill="#fab9ba"><rect x="1171" y="387" width="6" height="6"/><rect x="1171" y="568" width="6" height="6"/><rect x="1171" y="658" width="6" height="6"/></g><g fill="#fbc7c9"><rect x="1177" y="387" width="6" height="6"/><rect x="1177" y="568" width="6" height="6"/><rect x="1177" y="658" width="6" height="6"/></g><g fill="#fab4b2"><rect x="1183" y="387" width="6" height="6"/><rect x="1183" y="568" width="6" height="6"/><rect x="1183" y="658" width="6" height="6"/></g><g fill="#fbd2d6"><rect x="1189" y="387" width="6" height="6"/><rect x="1189" y="568" width="6" height="6"/><rect x="1189" y="658" width="6" height="6"/></g><g fill="#fcd7d6"><rect x="1195" y="387" width="6" height="6"/><rect x="1195" y="568" width="6" height="6"/><rect x="1195" y="658" width="6" height="6"/></g><g fill="#fbd0d2"><rect x="1201" y="387" width="6" height="6"/><rect x="1201" y="568" width="6" height="6"/><rect x="1201" y="658" width="6" height="6"/></g><g fill="#fcdbd9"><rect x="1207" y="387" width="6" height="6"/><rect x="1207" y="478" width="6" height="6"/><rect x="1207" y="568" width="6" height="6"/><rect x="1207" y="658" width="6" height="6"/></g><g fill="#fac3c3"><rect x="1213" y="387" width="6" height="6"/><rect x="1213" y="478" width="6" height="6"/><rect x="1213" y="568" width="6" height="6"/><rect x="1213" y="658" width="6" height="6"/></g><g fill="#fbccca"><rect x="1219" y="387" width="6" height="6"/><rect x="1219" y="568" width="6" height="6"/><rect x="1219" y="658" width="6" height="6"/></g><g fill="#f9b6b6"><rect x="1225" y="387" width="6" height="6"/><rect x="1225" y="568" width="6" height="6"/><rect x="1225" y="658" width="6" height="6"/></g><g fill="#fcd6d8"><rect x="1231" y="387" width="6" height="6"/><rect x="1189" y="429" width="6" height="6"/><rect x="1231" y="478" width="6" height="6"/><rect x="1231" y="568" width="6" height="6"/><rect x="1189" y="610" width="6" height="6"/><rect x="1189" y="616" width="6" height="6"/><rect x="1231" y="658" width="6" height="6"/></g><g fill="#e0e1e4"><rect x="167" y="393" width="6" height="6"/><rect x="167" y="484" width="6" height="6"/><rect x="167" y="574" width="6" height="6"/></g><g fill="#eeeceb"><rect x="173" y="393" width="6" height="6"/><rect x="786" y="393" width="6" height="6"/><rect x="173" y="484" width="6" height="6"/><rect x="786" y="484" width="6" height="6"/><rect x="173" y="574" width="6" height="6"/><rect x="786" y="574" width="6" height="6"/></g><g fill="#dcdcde"><rect x="179" y="393" width="6" height="6"/><rect x="209" y="435" width="6" height="7"/><rect x="179" y="484" width="6" height="6"/><rect x="179" y="574" width="6" height="6"/><rect x="774" y="664" width="6" height="6"/></g><g fill="#f8fbfe"><rect x="185" y="393" width="6" height="6"/><rect x="185" y="484" width="6" height="6"/><rect x="185" y="574" width="6" height="6"/></g><g fill="#eceae8"><rect x="191" y="393" width="6" height="6"/><rect x="191" y="484" width="6" height="6"/><rect x="191" y="574" width="6" height="6"/></g><g fill="#bdbcbf"><rect x="203" y="393" width="6" height="6"/><rect x="203" y="484" width="6" height="6"/><rect x="203" y="574" width="6" height="6"/></g><g fill="#fafdfd"><rect x="209" y="393" width="6" height="6"/><rect x="209" y="484" width="6" height="6"/><rect x="209" y="574" width="6" height="6"/></g><g fill="#dfdddc"><rect x="215" y="393" width="6" height="6"/><rect x="215" y="484" width="6" height="6"/><rect x="215" y="574" width="6" height="6"/></g><g fill="#dfdfe0"><rect x="227" y="393" width="6" height="6"/><rect x="227" y="484" width="6" height="6"/><rect x="227" y="574" width="6" height="6"/></g><g fill="#e4e4e2"><rect x="233" y="393" width="6" height="6"/><rect x="233" y="484" width="6" height="6"/><rect x="233" y="574" width="6" height="6"/></g><g fill="#e8ecef"><rect x="239" y="393" width="6" height="6"/><rect x="239" y="484" width="6" height="6"/><rect x="239" y="574" width="6" height="6"/></g><g fill="#ece9e8"><rect x="245" y="393" width="6" height="6"/><rect x="245" y="484" width="6" height="6"/><rect x="245" y="574" width="6" height="6"/></g><g fill="#d9dde0"><rect x="251" y="393" width="6" height="6"/><rect x="251" y="484" width="6" height="6"/><rect x="251" y="574" width="6" height="6"/></g><g fill="#e8e6e4"><rect x="257" y="393" width="6" height="6"/><rect x="257" y="484" width="6" height="6"/><rect x="257" y="574" width="6" height="6"/><rect x="997" y="658" width="6" height="6"/></g><g fill="#e0e2e5"><rect x="263" y="393" width="6" height="6"/><rect x="263" y="484" width="6" height="6"/><rect x="263" y="574" width="6" height="6"/></g><g fill="#dbdcdd"><rect x="269" y="393" width="6" height="6"/><rect x="269" y="484" width="6" height="6"/><rect x="269" y="574" width="6" height="6"/><rect x="1358" y="664" width="6" height="6"/></g><g fill="#e2e4e5"><rect x="275" y="393" width="6" height="6"/><rect x="275" y="484" width="6" height="6"/><rect x="275" y="574" width="6" height="6"/></g><g fill="#e4e2e2"><rect x="287" y="393" width="6" height="6"/><rect x="287" y="484" width="6" height="6"/><rect x="287" y="574" width="6" height="6"/></g><g fill="#e9edf0"><rect x="293" y="393" width="6" height="6"/><rect x="293" y="484" width="6" height="6"/><rect x="293" y="574" width="6" height="6"/></g><g fill="#fffefc"><rect x="450" y="393" width="6" height="6"/><rect x="1087" y="393" width="6" height="6"/><rect x="450" y="484" width="6" height="6"/><rect x="1087" y="484" width="6" height="6"/><rect x="450" y="574" width="6" height="6"/><rect x="1087" y="574" width="6" height="6"/><rect x="450" y="664" width="6" height="6"/></g><g fill="#d9d8d9"><rect x="456" y="393" width="6" height="6"/><rect x="456" y="484" width="6" height="6"/><rect x="456" y="574" width="6" height="6"/></g><g fill="#e2e3e5"><rect x="474" y="393" width="6" height="6"/><rect x="474" y="484" width="6" height="6"/><rect x="474" y="574" width="6" height="6"/><rect x="1003" y="664" width="6" height="6"/><rect x="1334" y="664" width="6" height="6"/></g><g fill="#e3e3e3"><rect x="480" y="393" width="6" height="6"/><rect x="480" y="484" width="6" height="6"/><rect x="480" y="574" width="6" height="6"/></g><g fill="#dbdadc"><rect x="492" y="393" width="6" height="6"/><rect x="492" y="484" width="6" height="6"/><rect x="492" y="574" width="6" height="6"/></g><g fill="#d9d9da"><rect x="498" y="393" width="6" height="6"/><rect x="810" y="435" width="6" height="7"/><rect x="498" y="484" width="6" height="6"/><rect x="498" y="574" width="6" height="6"/><rect x="528" y="658" width="6" height="6"/><rect x="528" y="664" width="6" height="6"/></g><g fill="#e3e2e2"><rect x="510" y="393" width="6" height="6"/><rect x="1081" y="429" width="6" height="6"/><rect x="510" y="484" width="6" height="6"/><rect x="510" y="574" width="6" height="6"/></g><g fill="#dee0e2"><rect x="516" y="393" width="6" height="6"/><rect x="558" y="393" width="6" height="6"/><rect x="816" y="393" width="6" height="6"/><rect x="516" y="484" width="6" height="6"/><rect x="558" y="484" width="6" height="6"/><rect x="816" y="484" width="6" height="6"/><rect x="516" y="574" width="6" height="6"/><rect x="558" y="574" width="6" height="6"/><rect x="816" y="574" width="6" height="6"/></g><g fill="#e0dfde"><rect x="528" y="393" width="6" height="6"/><rect x="528" y="484" width="6" height="6"/><rect x="528" y="574" width="6" height="6"/></g><g fill="#e4e5e7"><rect x="534" y="393" width="6" height="6"/><rect x="534" y="484" width="6" height="6"/><rect x="534" y="574" width="6" height="6"/></g><g fill="#e6e7e8"><rect x="540" y="393" width="6" height="6"/><rect x="582" y="429" width="6" height="6"/><rect x="540" y="484" width="6" height="6"/><rect x="540" y="574" width="6" height="6"/></g><g fill="#e0dede"><rect x="546" y="393" width="6" height="6"/><rect x="546" y="484" width="6" height="6"/><rect x="546" y="574" width="6" height="6"/></g><g fill="#e5e6e9"><rect x="552" y="393" width="6" height="6"/><rect x="263" y="429" width="6" height="6"/><rect x="552" y="484" width="6" height="6"/><rect x="552" y="574" width="6" height="6"/></g><g fill="#eae8e7"><rect x="564" y="393" width="6" height="6"/><rect x="564" y="484" width="6" height="6"/><rect x="564" y="574" width="6" height="6"/><rect x="798" y="664" width="6" height="6"/></g><g fill="#e1e2e3"><rect x="570" y="393" width="6" height="6"/><rect x="570" y="484" width="6" height="6"/><rect x="570" y="574" width="6" height="6"/><rect x="804" y="664" width="6" height="6"/></g><g fill="#c7cbce"><rect x="576" y="393" width="6" height="6"/><rect x="576" y="484" width="6" height="6"/><rect x="576" y="574" width="6" height="6"/></g><g fill="#e0e0e0"><rect x="582" y="393" width="6" height="6"/><rect x="582" y="484" width="6" height="6"/><rect x="582" y="574" width="6" height="6"/></g><g fill="#dee0e3"><rect x="594" y="393" width="6" height="6"/><rect x="1039" y="393" width="6" height="6"/><rect x="594" y="484" width="6" height="6"/><rect x="1039" y="484" width="6" height="6"/><rect x="594" y="574" width="6" height="6"/><rect x="1039" y="574" width="6" height="6"/><rect x="1340" y="664" width="6" height="6"/></g><g fill="#e0dfdf"><rect x="606" y="393" width="6" height="6"/><rect x="606" y="484" width="6" height="6"/><rect x="606" y="574" width="6" height="6"/></g><g fill="#dbdcde"><rect x="612" y="393" width="6" height="6"/><rect x="997" y="435" width="6" height="7"/><rect x="612" y="484" width="6" height="6"/><rect x="612" y="574" width="6" height="6"/><rect x="570" y="658" width="6" height="6"/></g><g fill="#dedfe1"><rect x="618" y="393" width="6" height="6"/><rect x="197" y="429" width="6" height="6"/><rect x="528" y="429" width="6" height="6"/><rect x="618" y="484" width="6" height="6"/><rect x="618" y="574" width="6" height="6"/><rect x="227" y="658" width="6" height="6"/><rect x="480" y="658" width="6" height="6"/></g><g fill="#eaeced"><rect x="624" y="393" width="6" height="6"/><rect x="624" y="484" width="6" height="6"/><rect x="624" y="574" width="6" height="6"/></g><g fill="#e5e3e1"><rect x="708" y="393" width="6" height="6"/><rect x="708" y="484" width="6" height="6"/><rect x="708" y="574" width="6" height="6"/></g><g fill="#e3e5e7"><rect x="714" y="393" width="6" height="6"/><rect x="714" y="484" width="6" height="6"/><rect x="714" y="574" width="6" height="6"/></g><g fill="#f0f0f1"><rect x="726" y="393" width="6" height="6"/><rect x="726" y="484" width="6" height="6"/><rect x="726" y="574" width="6" height="6"/></g><g fill="#e4e5e6"><rect x="732" y="393" width="6" height="6"/><rect x="732" y="484" width="6" height="6"/><rect x="732" y="574" width="6" height="6"/></g><g fill="#f2f4f4"><rect x="744" y="393" width="6" height="6"/><rect x="744" y="484" width="6" height="6"/><rect x="744" y="574" width="6" height="6"/></g><g fill="#dfdede"><rect x="750" y="393" width="6" height="6"/><rect x="1069" y="393" width="6" height="6"/><rect x="546" y="429" width="6" height="6"/><rect x="750" y="484" width="6" height="6"/><rect x="1069" y="484" width="6" height="6"/><rect x="750" y="574" width="6" height="6"/><rect x="1069" y="574" width="6" height="6"/><rect x="588" y="664" width="6" height="6"/></g><g fill="#e3e4e7"><rect x="756" y="393" width="6" height="6"/><rect x="570" y="429" width="6" height="6"/><rect x="756" y="484" width="6" height="6"/><rect x="756" y="574" width="6" height="6"/></g><g fill="#efeeef"><rect x="762" y="393" width="6" height="6"/><rect x="762" y="484" width="6" height="6"/><rect x="762" y="574" width="6" height="6"/><rect x="762" y="664" width="6" height="6"/></g><g fill="#f0efee"><rect x="768" y="393" width="6" height="6"/><rect x="768" y="484" width="6" height="6"/><rect x="768" y="574" width="6" height="6"/></g><g fill="#e1e4e7"><rect x="780" y="393" width="6" height="6"/><rect x="504" y="429" width="6" height="6"/><rect x="780" y="484" width="6" height="6"/><rect x="780" y="574" width="6" height="6"/></g><g fill="#e2e5e7"><rect x="792" y="393" width="6" height="6"/><rect x="792" y="484" width="6" height="6"/><rect x="792" y="574" width="6" height="6"/></g><g fill="#efedec"><rect x="798" y="393" width="6" height="6"/><rect x="798" y="484" width="6" height="6"/><rect x="798" y="574" width="6" height="6"/></g><g fill="#e7e7e9"><rect x="804" y="393" width="6" height="6"/><rect x="804" y="484" width="6" height="6"/><rect x="804" y="574" width="6" height="6"/></g><g fill="#e3e2e3"><rect x="810" y="393" width="6" height="6"/><rect x="810" y="484" width="6" height="6"/><rect x="810" y="574" width="6" height="6"/></g><g fill="#efeeed"><rect x="997" y="393" width="6" height="6"/><rect x="997" y="484" width="6" height="6"/><rect x="997" y="574" width="6" height="6"/></g><g fill="#e7e8ea"><rect x="1003" y="393" width="6" height="6"/><rect x="618" y="429" width="6" height="6"/><rect x="1003" y="484" width="6" height="6"/><rect x="1003" y="574" width="6" height="6"/></g><g fill="#eeefef"><rect x="1009" y="393" width="6" height="6"/><rect x="1009" y="484" width="6" height="6"/><rect x="1009" y="574" width="6" height="6"/></g><g fill="#e1e0e0"><rect x="1021" y="393" width="6" height="6"/><rect x="1021" y="484" width="6" height="6"/><rect x="1021" y="574" width="6" height="6"/></g><g fill="#e6e5e3"><rect x="1027" y="393" width="6" height="6"/><rect x="1027" y="484" width="6" height="6"/><rect x="1027" y="574" width="6" height="6"/></g><g fill="#e6e8ea"><rect x="1033" y="393" width="6" height="6"/><rect x="1033" y="484" width="6" height="6"/><rect x="1033" y="574" width="6" height="6"/></g><g fill="#f4f5f4"><rect x="1045" y="393" width="6" height="6"/><rect x="1045" y="484" width="6" height="6"/><rect x="1045" y="574" width="6" height="6"/></g><g fill="#e8e8e8"><rect x="1063" y="393" width="6" height="6"/><rect x="1063" y="484" width="6" height="6"/><rect x="1063" y="574" width="6" height="6"/></g><g fill="#eef0f3"><rect x="1093" y="393" width="6" height="6"/><rect x="1093" y="484" width="6" height="6"/><rect x="1093" y="574" width="6" height="6"/></g><g fill="#feeae6"><rect x="1165" y="393" width="6" height="6"/><rect x="1165" y="574" width="6" height="6"/><rect x="1165" y="664" width="6" height="6"/></g><g fill="#fbcacc"><rect x="1171" y="393" width="6" height="6"/><rect x="1171" y="574" width="6" height="6"/><rect x="1171" y="664" width="6" height="6"/></g><g fill="#fbd1d0"><rect x="1177" y="393" width="6" height="6"/><rect x="1177" y="574" width="6" height="6"/><rect x="1177" y="664" width="6" height="6"/></g><g fill="#fcd3d3"><rect x="1183" y="393" width="6" height="6"/><rect x="1183" y="574" width="6" height="6"/><rect x="1183" y="664" width="6" height="6"/></g><g fill="#fbced0"><rect x="1189" y="393" width="6" height="6"/><rect x="1189" y="574" width="6" height="6"/><rect x="1189" y="664" width="6" height="6"/></g><g fill="#fcd9d8"><rect x="1201" y="393" width="6" height="6"/><rect x="1183" y="484" width="6" height="6"/><rect x="1201" y="484" width="6" height="6"/><rect x="1201" y="574" width="6" height="6"/><rect x="1201" y="664" width="6" height="6"/></g><g fill="#fcd7d7"><rect x="1207" y="393" width="6" height="6"/><rect x="1225" y="472" width="6" height="6"/><rect x="1207" y="574" width="6" height="6"/><rect x="1207" y="664" width="6" height="6"/></g><g fill="#fcd0d0"><rect x="1213" y="393" width="6" height="6"/><rect x="1213" y="574" width="6" height="6"/><rect x="1213" y="664" width="6" height="6"/></g><g fill="#fcd3d2"><rect x="1219" y="393" width="6" height="6"/><rect x="1219" y="478" width="6" height="6"/><rect x="1225" y="484" width="6" height="6"/><rect x="1219" y="574" width="6" height="6"/><rect x="1219" y="664" width="6" height="6"/></g><g fill="#fbcccc"><rect x="1225" y="393" width="6" height="6"/><rect x="1225" y="574" width="6" height="6"/><rect x="1219" y="616" width="6" height="6"/><rect x="1225" y="664" width="6" height="6"/></g><g fill="#fcddde"><rect x="1231" y="393" width="6" height="6"/><rect x="1231" y="574" width="6" height="6"/><rect x="1231" y="664" width="6" height="6"/></g><g fill="#fef1f1"><rect x="1237" y="399" width="6" height="6"/><rect x="1237" y="580" width="6" height="6"/><rect x="1237" y="670" width="6" height="6"/></g><g fill="#f3f6f9"><rect x="149" y="411" width="1218" height="6"/></g><g fill="#fbeff0"><rect x="1159" y="423" width="6" height="6"/></g><g fill="#fdeded"><rect x="1237" y="423" width="6" height="6"/><rect x="1237" y="604" width="6" height="6"/><rect x="1237" y="694" width="6" height="5"/></g><g fill="#d0d1d2"><rect x="161" y="429" width="6" height="6"/></g><g fill="#e4e7eb"><rect x="167" y="429" width="6" height="6"/></g><g fill="#e6e7ea"><rect x="173" y="429" width="6" height="6"/><rect x="762" y="429" width="6" height="6"/></g><g fill="#cdd1d5"><rect x="179" y="429" width="6" height="6"/></g><g fill="#dfe2e6"><rect x="191" y="429" width="6" height="6"/></g><g fill="#e1e5e9"><rect x="203" y="429" width="6" height="6"/><rect x="215" y="429" width="6" height="6"/><rect x="756" y="429" width="6" height="6"/></g><g fill="#e0e1e3"><rect x="221" y="429" width="6" height="6"/><rect x="257" y="429" width="6" height="6"/></g><g fill="#e5e7ea"><rect x="227" y="429" width="6" height="6"/></g><g fill="#cac7c8"><rect x="233" y="429" width="6" height="6"/><rect x="233" y="435" width="6" height="7"/></g><g fill="#e0e6ed"><rect x="239" y="429" width="6" height="6"/></g><g fill="#cecfd2"><rect x="245" y="429" width="6" height="6"/></g><g fill="#ced1d7"><rect x="251" y="429" width="6" height="6"/></g><g fill="#e4e6ea"><rect x="269" y="429" width="6" height="6"/><rect x="804" y="429" width="6" height="6"/></g><g fill="#e5e9ed"><rect x="275" y="429" width="6" height="6"/></g><g fill="#ededef"><rect x="281" y="429" width="6" height="6"/></g><g fill="#e1e3e5"><rect x="287" y="429" width="6" height="6"/></g><g fill="#e0e4e9"><rect x="293" y="429" width="6" height="6"/></g><g fill="#f5f6f7"><rect x="450" y="429" width="6" height="6"/></g><g fill="#dbdce1"><rect x="456" y="429" width="6" height="6"/></g><g fill="#cccdd1"><rect x="462" y="429" width="6" height="6"/></g><g fill="#e8ebee"><rect x="468" y="429" width="6" height="6"/></g><g fill="#e0e2e6"><rect x="480" y="429" width="6" height="6"/><rect x="462" y="664" width="6" height="6"/></g><g fill="#dedddf"><rect x="486" y="429" width="6" height="6"/></g><g fill="#d0d2d6"><rect x="492" y="429" width="6" height="6"/></g><g fill="#dfe3e8"><rect x="498" y="429" width="6" height="6"/></g><g fill="#e4e4e7"><rect x="510" y="429" width="6" height="6"/></g><g fill="#ced1d5"><rect x="516" y="429" width="6" height="6"/></g><g fill="#e2e5e9"><rect x="522" y="429" width="6" height="6"/></g><g fill="#dadce0"><rect x="534" y="429" width="6" height="6"/></g><g fill="#d7dbdf"><rect x="540" y="429" width="6" height="6"/></g><g fill="#d9dce2"><rect x="558" y="429" width="6" height="6"/></g><g fill="#e8e9eb"><rect x="564" y="429" width="6" height="6"/></g><g fill="#d9dde2"><rect x="576" y="429" width="6" height="6"/></g><g fill="#dbe0e4"><rect x="594" y="429" width="6" height="6"/></g><g fill="#e7e9ec"><rect x="606" y="429" width="6" height="6"/></g><g fill="#dbdde2"><rect x="612" y="429" width="6" height="6"/></g><g fill="#ced1d6"><rect x="624" y="429" width="6" height="6"/></g><g fill="#d8d8d8"><rect x="708" y="429" width="6" height="6"/></g><g fill="#d2d5da"><rect x="714" y="429" width="6" height="6"/></g><g fill="#e8e9ec"><rect x="726" y="429" width="6" height="6"/><rect x="1346" y="435" width="6" height="7"/></g><g fill="#ccced2"><rect x="738" y="429" width="6" height="6"/></g><g fill="#eceff1"><rect x="744" y="429" width="6" height="6"/></g><g fill="#e6e7e7"><rect x="768" y="429" width="6" height="6"/></g><g fill="#e2e6ec"><rect x="774" y="429" width="6" height="6"/></g><g fill="#dee2e6"><rect x="780" y="429" width="6" height="6"/></g><g fill="#d2d7dc"><rect x="792" y="429" width="6" height="6"/></g><g fill="#d0d1d3"><rect x="798" y="429" width="6" height="6"/><rect x="600" y="435" width="6" height="7"/><rect x="1304" y="435" width="6" height="7"/></g><g fill="#e0e3e8"><rect x="816" y="429" width="6" height="6"/></g><g fill="#d9dce0"><rect x="1003" y="429" width="6" height="6"/><rect x="756" y="664" width="6" height="6"/></g><g fill="#d2d4d8"><rect x="1009" y="429" width="6" height="6"/></g><g fill="#f3f6fa"><rect x="1015" y="429" width="6" height="6"/></g><g fill="#d7d8dc"><rect x="1021" y="429" width="6" height="6"/></g><g fill="#e1dfde"><rect x="1027" y="429" width="6" height="6"/><rect x="287" y="658" width="6" height="6"/><rect x="287" y="664" width="6" height="6"/></g><g fill="#dfe2e5"><rect x="1033" y="429" width="6" height="6"/></g><g fill="#cfd6dd"><rect x="1039" y="429" width="6" height="6"/></g><g fill="#dad9d8"><rect x="1051" y="429" width="6" height="6"/></g><g fill="#d1d6dc"><rect x="1057" y="429" width="6" height="6"/></g><g fill="#dadde0"><rect x="1063" y="429" width="6" height="6"/><rect x="762" y="435" width="6" height="7"/></g><g fill="#d7d6d7"><rect x="1069" y="429" width="6" height="6"/></g><g fill="#eaf0f6"><rect x="1075" y="429" width="6" height="6"/></g><g fill="#d8dce1"><rect x="1087" y="429" width="6" height="6"/></g><g fill="#d3d6db"><rect x="1093" y="429" width="6" height="6"/></g><g fill="#fcefef"><rect x="1159" y="429" width="6" height="6"/><rect x="1159" y="435" width="6" height="7"/><rect x="1159" y="442" width="6" height="6"/></g><g fill="#fee9e5"><rect x="1165" y="429" width="6" height="6"/><rect x="1165" y="610" width="6" height="6"/></g><g fill="#fbcbce"><rect x="1171" y="429" width="6" height="6"/><rect x="1171" y="610" width="6" height="6"/></g><g fill="#fbcdce"><rect x="1177" y="429" width="6" height="6"/><rect x="1177" y="610" width="6" height="6"/></g><g fill="#fbcfce"><rect x="1183" y="429" width="6" height="6"/><rect x="1183" y="610" width="6" height="6"/></g><g fill="#fddbd8"><rect x="1195" y="429" width="6" height="6"/><rect x="1195" y="610" width="6" height="6"/></g><g fill="#fcd1d4"><rect x="1201" y="429" width="6" height="6"/><rect x="1201" y="610" width="6" height="6"/></g><g fill="#fcd6d3"><rect x="1207" y="429" width="6" height="6"/><rect x="1207" y="610" width="6" height="6"/></g><g fill="#fbcdd0"><rect x="1213" y="429" width="6" height="6"/><rect x="1213" y="610" width="6" height="6"/></g><g fill="#fcd2d0"><rect x="1219" y="429" width="6" height="6"/><rect x="1219" y="610" width="6" height="6"/></g><g fill="#fcd2d4"><rect x="1225" y="429" width="6" height="6"/><rect x="1225" y="610" width="6" height="6"/></g><g fill="#fddfe1"><rect x="1231" y="429" width="6" height="6"/><rect x="1231" y="610" width="6" height="6"/></g><g fill="#f2f1f2"><rect x="1286" y="429" width="6" height="6"/></g><g fill="#d1d5db"><rect x="1292" y="429" width="6" height="6"/><rect x="462" y="435" width="6" height="7"/></g><g fill="#dbdbdd"><rect x="1298" y="429" width="6" height="6"/></g><g fill="#d8dbde"><rect x="1310" y="429" width="6" height="6"/></g><g fill="#cacbcf"><rect x="1316" y="429" width="6" height="6"/></g><g fill="#f2f5f9"><rect x="1322" y="429" width="6" height="6"/></g><g fill="#dcdcdd"><rect x="1328" y="429" width="6" height="6"/></g><g fill="#e2e5e8"><rect x="1334" y="429" width="6" height="6"/></g><g fill="#d6dbdf"><rect x="1340" y="429" width="6" height="6"/></g><g fill="#d7dadd"><rect x="1358" y="429" width="6" height="6"/></g><g fill="#cfcfcd"><rect x="161" y="435" width="6" height="7"/></g><g fill="#c5c9cf"><rect x="167" y="435" width="6" height="7"/></g><g fill="#c2c1c3"><rect x="173" y="435" width="6" height="7"/><rect x="492" y="435" width="6" height="7"/></g><g fill="#c9cfd5"><rect x="179" y="435" width="6" height="7"/></g><g fill="#c9ced4"><rect x="191" y="435" width="6" height="7"/></g><g fill="#c5c6c9"><rect x="197" y="435" width="6" height="7"/></g><g fill="#ced0d3"><rect x="203" y="435" width="6" height="7"/><rect x="173" y="658" width="6" height="6"/></g><g fill="#c3c8ce"><rect x="215" y="435" width="6" height="7"/></g><g fill="#cac6c5"><rect x="221" y="435" width="6" height="7"/></g><g fill="#c6cbd3"><rect x="227" y="435" width="6" height="7"/></g><g fill="#e3ebf2"><rect x="239" y="435" width="6" height="7"/></g><g fill="#cccacc"><rect x="245" y="435" width="6" height="7"/></g><g fill="#ccd1d6"><rect x="251" y="435" width="6" height="7"/></g><g fill="#cdcbce"><rect x="257" y="435" width="6" height="7"/></g><g fill="#cfd2d5"><rect x="263" y="435" width="6" height="7"/></g><g fill="#c1c2c6"><rect x="269" y="435" width="6" height="7"/></g><g fill="#cbced3"><rect x="275" y="435" width="6" height="7"/><rect x="516" y="435" width="6" height="7"/></g><g fill="#d6d7db"><rect x="281" y="435" width="6" height="7"/></g><g fill="#d8d6d6"><rect x="287" y="435" width="6" height="7"/></g><g fill="#d1d9e0"><rect x="293" y="435" width="6" height="7"/></g><g fill="#c8c8cd"><rect x="456" y="435" width="6" height="7"/></g><g fill="#d0d0d0"><rect x="468" y="435" width="6" height="7"/></g><g fill="#c4c6cb"><rect x="474" y="435" width="6" height="7"/></g><g fill="#d1d4d6"><rect x="480" y="435" width="6" height="7"/></g><g fill="#c8cdd3"><rect x="498" y="435" width="6" height="7"/></g><g fill="#cacccf"><rect x="504" y="435" width="6" height="7"/></g><g fill="#c6c6c9"><rect x="510" y="435" width="6" height="7"/></g><g fill="#ced0d4"><rect x="534" y="435" width="6" height="7"/></g><g fill="#cccfd2"><rect x="540" y="435" width="6" height="7"/><rect x="1292" y="658" width="6" height="6"/></g><g fill="#d1d5dd"><rect x="552" y="435" width="6" height="7"/></g><g fill="#cdd0d4"><rect x="558" y="435" width="6" height="7"/></g><g fill="#cfcdce"><rect x="564" y="435" width="6" height="7"/></g><g fill="#cbcfd4"><rect x="570" y="435" width="6" height="7"/><rect x="594" y="435" width="6" height="7"/></g><g fill="#c3c8cc"><rect x="576" y="435" width="6" height="7"/></g><g fill="#d0d0d1"><rect x="582" y="435" width="6" height="7"/></g><g fill="#cecfd3"><rect x="588" y="435" width="6" height="7"/></g><g fill="#c5c5c7"><rect x="606" y="435" width="6" height="7"/><rect x="462" y="658" width="6" height="6"/></g><g fill="#c0c0c3"><rect x="612" y="435" width="6" height="7"/></g><g fill="#ccd1d5"><rect x="618" y="435" width="6" height="7"/></g><g fill="#dadfe5"><rect x="624" y="435" width="6" height="7"/></g><g fill="#d4d4d4"><rect x="708" y="435" width="6" height="7"/></g><g fill="#c6cacf"><rect x="714" y="435" width="6" height="7"/></g><g fill="#e9ebee"><rect x="726" y="435" width="6" height="7"/><rect x="1093" y="664" width="6" height="6"/></g><g fill="#c4c3c7"><rect x="738" y="435" width="6" height="7"/></g><g fill="#e4eaef"><rect x="744" y="435" width="6" height="7"/></g><g fill="#cccacb"><rect x="750" y="435" width="6" height="7"/></g><g fill="#c6cad0"><rect x="756" y="435" width="6" height="7"/></g><g fill="#e8e7e6"><rect x="768" y="435" width="6" height="7"/></g><g fill="#cdced3"><rect x="774" y="435" width="6" height="7"/></g><g fill="#d5dce3"><rect x="780" y="435" width="6" height="7"/></g><g fill="#c4cad1"><rect x="792" y="435" width="6" height="7"/></g><g fill="#dcdddf"><rect x="798" y="435" width="6" height="7"/></g><g fill="#d5d7db"><rect x="804" y="435" width="6" height="7"/></g><g fill="#c1c6cc"><rect x="816" y="435" width="6" height="7"/></g><g fill="#d6d8dc"><rect x="1003" y="435" width="6" height="7"/></g><g fill="#dbdde0"><rect x="1009" y="435" width="6" height="7"/></g><g fill="#edeff2"><rect x="1015" y="435" width="6" height="7"/></g><g fill="#d0d0d3"><rect x="1021" y="435" width="6" height="7"/></g><g fill="#dbd8d8"><rect x="1027" y="435" width="6" height="7"/></g><g fill="#d7dce2"><rect x="1033" y="435" width="6" height="7"/></g><g fill="#c8cbd0"><rect x="1039" y="435" width="6" height="7"/></g><g fill="#ebeff1"><rect x="1045" y="435" width="6" height="7"/></g><g fill="#cdcdd0"><rect x="1051" y="435" width="6" height="7"/></g><g fill="#d3d6d9"><rect x="1057" y="435" width="6" height="7"/><rect x="1340" y="658" width="6" height="6"/></g><g fill="#d5d8da"><rect x="1063" y="435" width="6" height="7"/></g><g fill="#cccbcb"><rect x="1069" y="435" width="6" height="7"/></g><g fill="#dde4eb"><rect x="1075" y="435" width="6" height="7"/></g><g fill="#f3f5f7"><rect x="1087" y="435" width="6" height="7"/></g><g fill="#dbdee3"><rect x="1093" y="435" width="6" height="7"/></g><g fill="#fabfc0"><rect x="1171" y="435" width="6" height="7"/></g><g fill="#fbc0be"><rect x="1183" y="435" width="6" height="7"/></g><g fill="#fbcfd1"><rect x="1189" y="435" width="6" height="7"/></g><g fill="#fcdad5"><rect x="1195" y="435" width="6" height="7"/></g><g fill="#fbced2"><rect x="1201" y="435" width="6" height="7"/></g><g fill="#fbcdcd"><rect x="1213" y="435" width="6" height="7"/></g><g fill="#fbc7c7"><rect x="1219" y="435" width="6" height="7"/></g><g fill="#fabcbd"><rect x="1225" y="435" width="6" height="7"/></g><g fill="#f0f0f0"><rect x="1286" y="435" width="6" height="7"/><rect x="726" y="664" width="6" height="6"/></g><g fill="#cdd1d7"><rect x="1292" y="435" width="6" height="7"/></g><g fill="#d4d9dd"><rect x="1310" y="435" width="6" height="7"/></g><g fill="#d1cfcf"><rect x="1316" y="435" width="6" height="7"/></g><g fill="#d9dee6"><rect x="1322" y="435" width="6" height="7"/></g><g fill="#d8d7d8"><rect x="1328" y="435" width="6" height="7"/><rect x="606" y="658" width="6" height="6"/></g><g fill="#d4d8dc"><rect x="1334" y="435" width="6" height="7"/></g><g fill="#d2d6da"><rect x="1340" y="435" width="6" height="7"/></g><g fill="#d0d1d4"><rect x="1352" y="435" width="6" height="7"/></g><g fill="#e9edf2"><rect x="1364" y="435" width="3" height="7"/></g><g fill="#eeeef0"><rect x="197" y="442" width="6" height="6"/></g><g fill="#e5e8ed"><rect x="203" y="442" width="6" height="6"/></g><g fill="#e5e7ec"><rect x="504" y="442" width="6" height="6"/></g><g fill="#eaecef"><rect x="576" y="442" width="6" height="6"/></g><g fill="#fdeeee"><rect x="1237" y="442" width="6" height="6"/></g><g fill="#f6f5f8"><rect x="1159" y="448" width="6" height="6"/><rect x="1237" y="448" width="6" height="6"/></g><g fill="#f6f4f6"><rect x="1165" y="448" width="72" height="6"/></g><g fill="#f7f8fb"><rect x="149" y="454" width="1218" height="6"/></g><g fill="#feefed"><rect x="1165" y="472" width="6" height="6"/><rect x="1195" y="622" width="6" height="6"/></g><g fill="#fcdcdc"><rect x="1171" y="472" width="6" height="6"/></g><g fill="#fde0e2"><rect x="1177" y="472" width="6" height="6"/></g><g fill="#fddedd"><rect x="1183" y="472" width="6" height="6"/></g><g fill="#fcdcde"><rect x="1189" y="472" width="6" height="6"/></g><g fill="#fddddf"><rect x="1201" y="472" width="6" height="6"/></g><g fill="#fde8e8"><rect x="1207" y="472" width="6" height="6"/></g><g fill="#fde7e7"><rect x="1213" y="472" width="6" height="6"/></g><g fill="#fde6e7"><rect x="1231" y="472" width="6" height="6"/><rect x="1231" y="622" width="6" height="6"/></g><g fill="#fde4e0"><rect x="1165" y="478" width="6" height="6"/></g><g fill="#fab9bb"><rect x="1171" y="478" width="6" height="6"/></g><g fill="#fbc8c7"><rect x="1177" y="478" width="6" height="6"/></g><g fill="#f9b4b4"><rect x="1183" y="478" width="6" height="6"/></g><g fill="#fbcfd2"><rect x="1189" y="478" width="6" height="6"/></g><g fill="#fcd4d3"><rect x="1195" y="478" width="6" height="6"/><rect x="1213" y="484" width="6" height="6"/></g><g fill="#fcd4d6"><rect x="1201" y="478" width="6" height="6"/><rect x="1189" y="484" width="6" height="6"/></g><g fill="#fabcbb"><rect x="1225" y="478" width="6" height="6"/></g><g fill="#feebe8"><rect x="1165" y="484" width="6" height="6"/></g><g fill="#fcd0d1"><rect x="1171" y="484" width="6" height="6"/></g><g fill="#fcdcda"><rect x="1195" y="484" width="6" height="6"/></g><g fill="#fcdadb"><rect x="1207" y="484" width="6" height="6"/></g><g fill="#fcd6d6"><rect x="1219" y="484" width="6" height="6"/></g><g fill="#fcf0f0"><rect x="1159" y="604" width="6" height="6"/><rect x="1159" y="694" width="6" height="5"/></g><g fill="#fee8e2"><rect x="1165" y="616" width="6" height="6"/></g><g fill="#fabbbd"><rect x="1171" y="616" width="6" height="6"/></g><g fill="#fac8c8"><rect x="1177" y="616" width="6" height="6"/></g><g fill="#fcd7d2"><rect x="1195" y="616" width="6" height="6"/></g><g fill="#fbcbd0"><rect x="1201" y="616" width="6" height="6"/></g><g fill="#fbcdcc"><rect x="1207" y="616" width="6" height="6"/></g><g fill="#fcdada"><rect x="1213" y="616" width="6" height="6"/></g><g fill="#fabdbe"><rect x="1225" y="616" width="6" height="6"/></g><g fill="#fde2e3"><rect x="1231" y="616" width="6" height="6"/></g><g fill="#feeae8"><rect x="1171" y="622" width="6" height="6"/></g><g fill="#fddddd"><rect x="1213" y="622" width="6" height="6"/></g><g fill="#fcdddd"><rect x="1225" y="622" width="6" height="6"/></g><g fill="#fbf6f6"><rect x="1159" y="628" width="6" height="6"/><rect x="1237" y="628" width="6" height="6"/></g><g fill="#fbf4f4"><rect x="1165" y="628" width="72" height="6"/></g><g fill="#f9f9fa"><rect x="456" y="652" width="6" height="6"/></g><g fill="#faf9f9"><rect x="588" y="652" width="6" height="6"/></g><g fill="#d4d6d9"><rect x="167" y="658" width="6" height="6"/><rect x="618" y="664" width="6" height="6"/></g><g fill="#e1e1e1"><rect x="179" y="658" width="6" height="6"/></g><g fill="#e1e1e3"><rect x="185" y="658" width="6" height="6"/></g><g fill="#dcdbdb"><rect x="191" y="658" width="6" height="6"/><rect x="468" y="664" width="6" height="6"/></g><g fill="#e2e2e1"><rect x="197" y="658" width="6" height="6"/></g><g fill="#d2d1d4"><rect x="203" y="658" width="6" height="6"/></g><g fill="#edf1f2"><rect x="209" y="658" width="6" height="6"/></g><g fill="#d5d2d1"><rect x="215" y="658" width="6" height="6"/></g><g fill="#d1ceca"><rect x="233" y="658" width="6" height="6"/></g><g fill="#dde3ea"><rect x="239" y="658" width="6" height="6"/></g><g fill="#d1cdcc"><rect x="245" y="658" width="6" height="6"/></g><g fill="#c7cdd1"><rect x="251" y="658" width="6" height="6"/></g><g fill="#e2e1e2"><rect x="263" y="658" width="6" height="6"/></g><g fill="#d7dade"><rect x="275" y="658" width="6" height="6"/></g><g fill="#dae0e3"><rect x="293" y="658" width="6" height="6"/></g><g fill="#e5e5e4"><rect x="468" y="658" width="6" height="6"/></g><g fill="#d9d8d8"><rect x="474" y="658" width="6" height="6"/><rect x="546" y="664" width="6" height="6"/></g><g fill="#d9d7d7"><rect x="486" y="658" width="6" height="6"/></g><g fill="#bcbbbe"><rect x="492" y="658" width="6" height="6"/></g><g fill="#d1d6db"><rect x="498" y="658" width="6" height="6"/></g><g fill="#dcdede"><rect x="504" y="658" width="6" height="6"/></g><g fill="#d7d5d6"><rect x="510" y="658" width="6" height="6"/></g><g fill="#d2d2d3"><rect x="534" y="658" width="6" height="6"/></g><g fill="#cacdd0"><rect x="540" y="658" width="6" height="6"/></g><g fill="#dad8d6"><rect x="546" y="658" width="6" height="6"/></g><g fill="#d4d6db"><rect x="552" y="658" width="6" height="6"/></g><g fill="#dfdddb"><rect x="564" y="658" width="6" height="6"/></g><g fill="#d3d7d9"><rect x="576" y="658" width="6" height="6"/></g><g fill="#e6e3e1"><rect x="582" y="658" width="6" height="6"/></g><g fill="#d6d9dd"><rect x="594" y="658" width="6" height="6"/></g><g fill="#e1e0df"><rect x="600" y="658" width="6" height="6"/></g><g fill="#d6d7da"><rect x="612" y="658" width="6" height="6"/><rect x="1003" y="658" width="6" height="6"/></g><g fill="#c9ccd1"><rect x="624" y="658" width="6" height="6"/></g><g fill="#d6d3d1"><rect x="708" y="658" width="6" height="6"/></g><g fill="#c4c7ca"><rect x="714" y="658" width="6" height="6"/></g><g fill="#dadadb"><rect x="720" y="658" width="6" height="6"/><rect x="1352" y="664" width="6" height="6"/></g><g fill="#f1f0f0"><rect x="726" y="658" width="6" height="6"/></g><g fill="#dcdbda"><rect x="732" y="658" width="6" height="6"/></g><g fill="#bcbdc0"><rect x="738" y="658" width="6" height="6"/></g><g fill="#f0f3f5"><rect x="744" y="658" width="6" height="6"/></g><g fill="#d4d7d9"><rect x="756" y="658" width="6" height="6"/></g><g fill="#eeebe7"><rect x="768" y="658" width="6" height="6"/></g><g fill="#dbdde1"><rect x="774" y="658" width="6" height="6"/></g><g fill="#dfe3e7"><rect x="780" y="658" width="6" height="6"/></g><g fill="#e9e4e0"><rect x="786" y="658" width="6" height="6"/></g><g fill="#bfc5cb"><rect x="792" y="658" width="6" height="6"/></g><g fill="#d5d4d4"><rect x="798" y="658" width="6" height="6"/></g><g fill="#d0d3d8"><rect x="816" y="658" width="6" height="6"/></g><g fill="#cecfd1"><rect x="1009" y="658" width="6" height="6"/></g><g fill="#d3d3d5"><rect x="1021" y="658" width="6" height="6"/></g><g fill="#e4ded9"><rect x="1027" y="658" width="6" height="6"/></g><g fill="#dde0e2"><rect x="1033" y="658" width="6" height="6"/></g><g fill="#c3c9cf"><rect x="1039" y="658" width="6" height="6"/></g><g fill="#cacfd4"><rect x="1057" y="658" width="6" height="6"/></g><g fill="#d7d9d9"><rect x="1063" y="658" width="6" height="6"/></g><g fill="#ccc7c5"><rect x="1069" y="658" width="6" height="6"/></g><g fill="#eff4fa"><rect x="1075" y="658" width="6" height="6"/></g><g fill="#dee2e5"><rect x="1087" y="658" width="6" height="6"/></g><g fill="#cfd1d4"><rect x="1093" y="658" width="6" height="6"/></g><g fill="#fbf9f7"><rect x="1286" y="658" width="6" height="6"/></g><g fill="#d7d6d6"><rect x="1298" y="658" width="6" height="6"/><rect x="738" y="664" width="6" height="6"/></g><g fill="#d5d6d7"><rect x="1304" y="658" width="6" height="6"/></g><g fill="#d2d4d5"><rect x="1310" y="658" width="6" height="6"/></g><g fill="#c2bfc0"><rect x="1316" y="658" width="6" height="6"/></g><g fill="#e7eaee"><rect x="1322" y="658" width="6" height="6"/></g><g fill="#dad7d7"><rect x="1328" y="658" width="6" height="6"/></g><g fill="#dee1e2"><rect x="1334" y="658" width="6" height="6"/></g><g fill="#d4d6d6"><rect x="1358" y="658" width="6" height="6"/></g><g fill="#d6d8dd"><rect x="167" y="664" width="6" height="6"/></g><g fill="#d2d3d4"><rect x="179" y="664" width="6" height="6"/></g><g fill="#f2f6f9"><rect x="185" y="664" width="6" height="6"/></g><g fill="#d9dadb"><rect x="197" y="664" width="6" height="6"/></g><g fill="#c2c1c5"><rect x="203" y="664" width="6" height="6"/></g><g fill="#f7fbfb"><rect x="209" y="664" width="6" height="6"/></g><g fill="#d6d2d2"><rect x="215" y="664" width="6" height="6"/></g><g fill="#dfe3e5"><rect x="221" y="664" width="6" height="6"/></g><g fill="#d2d4d6"><rect x="227" y="664" width="6" height="6"/></g><g fill="#dfdedb"><rect x="233" y="664" width="6" height="6"/></g><g fill="#e4e8ed"><rect x="239" y="664" width="6" height="6"/></g><g fill="#e4e0de"><rect x="245" y="664" width="6" height="6"/></g><g fill="#d1d7db"><rect x="251" y="664" width="6" height="6"/></g><g fill="#d6dadd"><rect x="263" y="664" width="6" height="6"/></g><g fill="#d1d1d2"><rect x="269" y="664" width="6" height="6"/></g><g fill="#dbdee0"><rect x="275" y="664" width="6" height="6"/></g><g fill="#e2e7eb"><rect x="293" y="664" width="6" height="6"/></g><g fill="#d3d0d2"><rect x="456" y="664" width="6" height="6"/></g><g fill="#d6d8da"><rect x="474" y="664" width="6" height="6"/></g><g fill="#d9d7d8"><rect x="492" y="664" width="6" height="6"/></g><g fill="#cecfd0"><rect x="504" y="664" width="6" height="6"/></g><g fill="#dad8d8"><rect x="510" y="664" width="6" height="6"/></g><g fill="#d8dadc"><rect x="516" y="664" width="6" height="6"/><rect x="558" y="664" width="6" height="6"/></g><g fill="#dddfe1"><rect x="534" y="664" width="6" height="6"/></g><g fill="#e1dfdd"><rect x="564" y="664" width="6" height="6"/></g><g fill="#dadbdd"><rect x="570" y="664" width="6" height="6"/><rect x="1039" y="664" width="6" height="6"/></g><g fill="#c7cbcd"><rect x="576" y="664" width="6" height="6"/></g><g fill="#d9d9d9"><rect x="582" y="664" width="6" height="6"/></g><g fill="#d8dadd"><rect x="594" y="664" width="6" height="6"/></g><g fill="#dddcdc"><rect x="600" y="664" width="6" height="6"/></g><g fill="#d6d4d4"><rect x="606" y="664" width="6" height="6"/></g><g fill="#d6d7d9"><rect x="612" y="664" width="6" height="6"/></g><g fill="#e8ebed"><rect x="624" y="664" width="6" height="6"/></g><g fill="#e0dedb"><rect x="708" y="664" width="6" height="6"/></g><g fill="#d9dbde"><rect x="714" y="664" width="6" height="6"/></g><g fill="#e4e4e5"><rect x="720" y="664" width="6" height="6"/></g><g fill="#dfdfdf"><rect x="732" y="664" width="6" height="6"/></g><g fill="#eef1f3"><rect x="744" y="664" width="6" height="6"/></g><g fill="#dedbda"><rect x="750" y="664" width="6" height="6"/></g><g fill="#efeeec"><rect x="768" y="664" width="6" height="6"/></g><g fill="#dee2e7"><rect x="780" y="664" width="6" height="6"/></g><g fill="#e9e7e6"><rect x="786" y="664" width="6" height="6"/></g><g fill="#dcdfe2"><rect x="792" y="664" width="6" height="6"/></g><g fill="#e9e9e8"><rect x="997" y="664" width="6" height="6"/></g><g fill="#e9e9ea"><rect x="1009" y="664" width="6" height="6"/><rect x="1081" y="664" width="6" height="6"/></g><g fill="#dbdadb"><rect x="1021" y="664" width="6" height="6"/></g><g fill="#e4e1df"><rect x="1027" y="664" width="6" height="6"/></g><g fill="#e3e6e9"><rect x="1033" y="664" width="6" height="6"/></g><g fill="#f3f5f4"><rect x="1045" y="664" width="6" height="6"/></g><g fill="#e2e3e3"><rect x="1063" y="664" width="6" height="6"/></g><g fill="#dedcdb"><rect x="1069" y="664" width="6" height="6"/></g><g fill="#e5eaee"><rect x="1075" y="664" width="6" height="6"/></g><g fill="#d9dce1"><rect x="1292" y="664" width="6" height="6"/></g><g fill="#e2e1e0"><rect x="1298" y="664" width="6" height="6"/></g><g fill="#dadad9"><rect x="1304" y="664" width="6" height="6"/></g><g fill="#e2e6e9"><rect x="1310" y="664" width="6" height="6"/></g><g fill="#e1dedc"><rect x="1316" y="664" width="6" height="6"/></g><g fill="#f0f3f7"><rect x="1322" y="664" width="6" height="6"/></g><g fill="#e4e1e0"><rect x="1328" y="664" width="6" height="6"/></g><g fill="#fcfcfb"><rect x="1346" y="664" width="6" height="6"/></g></svg>
<div class="ftr"><span>© 2025 OP-PAS试用版. All rights reserved.</span></div>
</body>
</html>
